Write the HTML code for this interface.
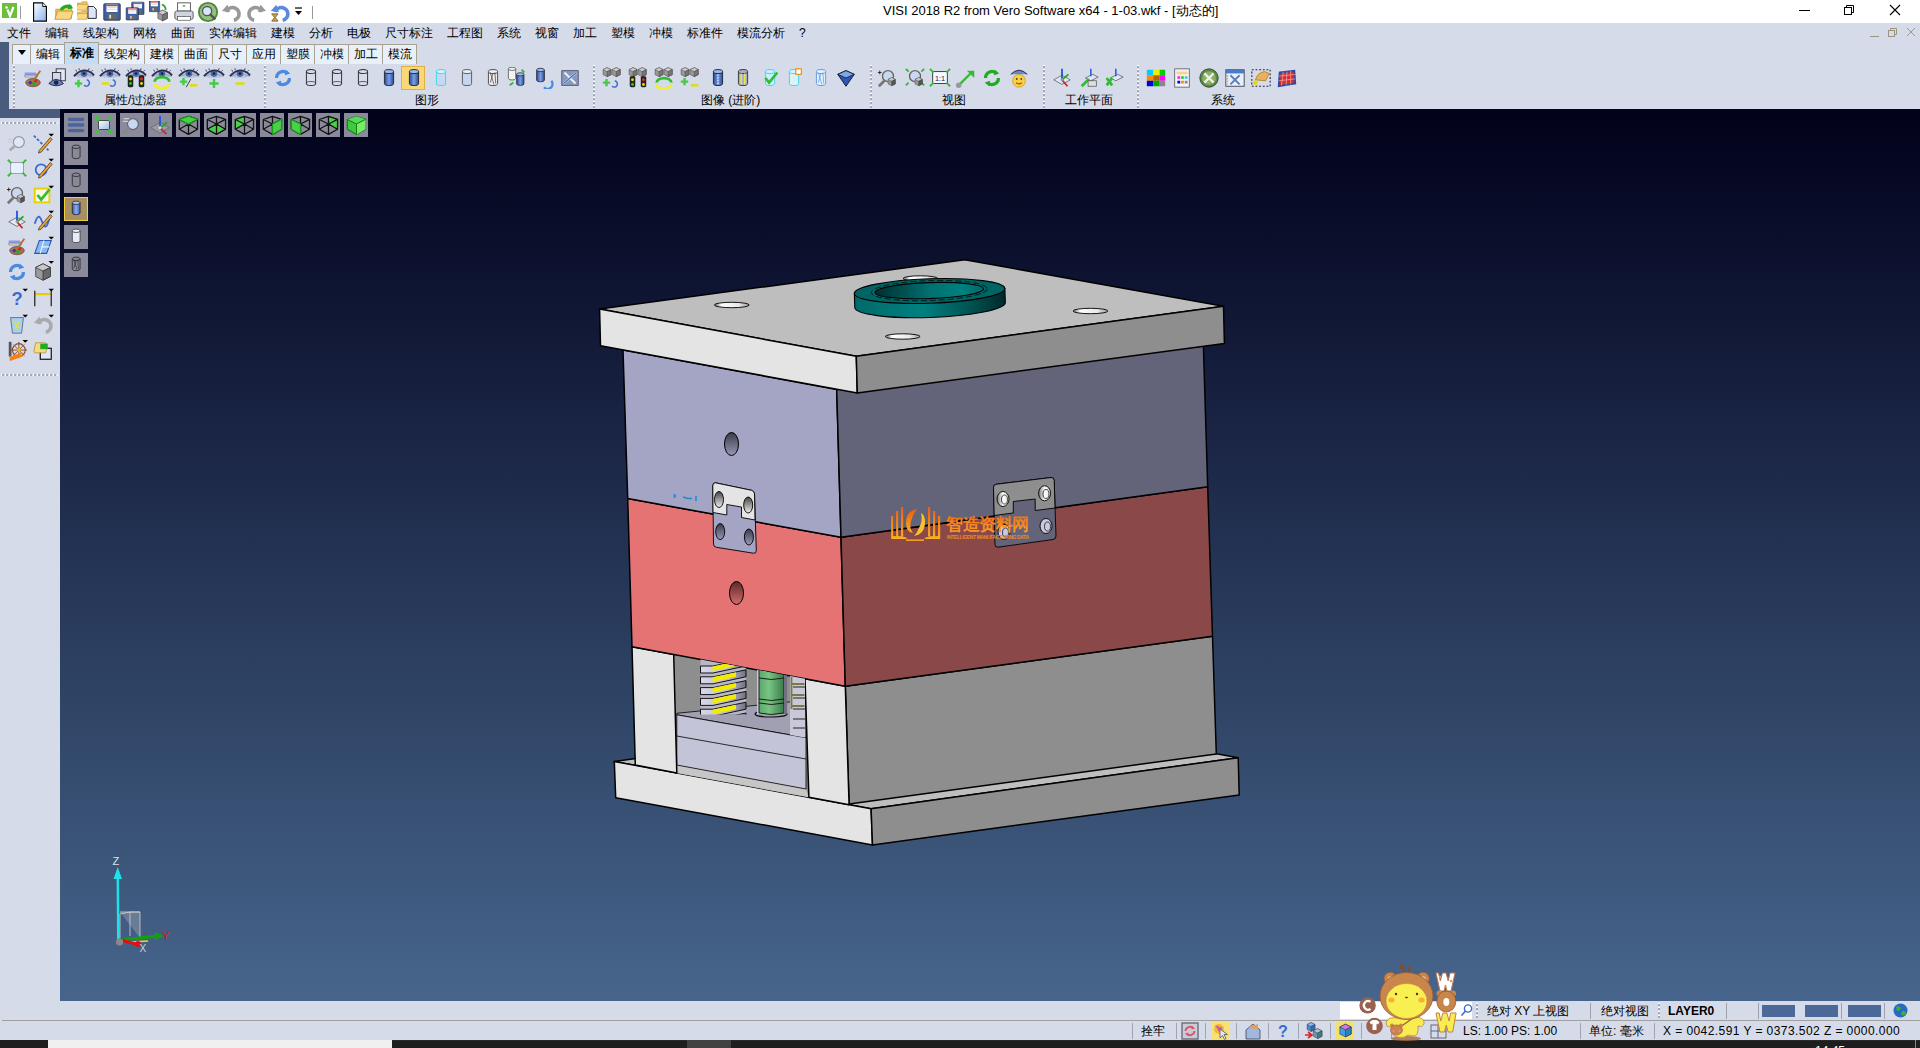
<!DOCTYPE html>
<html><head><meta charset="utf-8"><style>
*{margin:0;padding:0;box-sizing:border-box}
html,body{width:1920px;height:1048px;overflow:hidden;background:#d6dbe9;font-family:"Liberation Sans",sans-serif;position:relative}
.a{position:absolute}
.t{white-space:nowrap;line-height:1}
</style></head><body>
<div class="a" style="left:0;top:0;width:1920px;height:23px;background:#fff"></div>
<svg class="a" style="left:2px;top:3px" width="15" height="15" viewBox="0 0 15 15" ><rect x="0" y="0" width="15" height="15" fill="#6cbf3a"/><path d="M5.5,6.5 l2.5,6.5 l3.5,-9" stroke="#fff" stroke-width="2.2" fill="none"/><circle cx="4.5" cy="4.5" r="1.3" fill="#fff"/></svg>
<div class="a" style="left:20px;top:6px;width:1px;height:13px;background:#999"></div>
<svg class="a" style="left:29px;top:1px" width="22" height="22" viewBox="0 0 24 24" ><path d="M5,2 h10 l4,4 v16 h-14z" fill="url(#gdoc)" stroke="#000" stroke-width="1.2"/><path d="M15,2 v4 h4" fill="#fff" stroke="#000" stroke-width="1"/><defs><linearGradient id="gdoc" x1="0" y1="0" x2="1" y2="1"><stop offset="0" stop-color="#fff"/><stop offset="1" stop-color="#8ab0f0"/></linearGradient></defs></svg>
<svg class="a" style="left:53px;top:1px" width="22" height="22" viewBox="0 0 24 24" ><path d="M3,9 h7 l2,-2 h8 v12 h-17z" fill="#f4c85a" stroke="#b08a30" stroke-width=".8"/><path d="M2,20 l3,-9 h17 l-3,9z" fill="#fbd880" stroke="#b08a30" stroke-width=".8"/><path d="M9,10 a7,6 0 0 1 11,-3" stroke="#2a2" stroke-width="3.5" fill="none"/><path d="M18,3 l4,5 l-6,1z" fill="#2a2"/></svg>
<svg class="a" style="left:77px;top:1px" width="22" height="22" viewBox="0 0 24 24" ><g transform="translate(-3,-4) scale(.7)"><path d="M3,9 h7 l2,-2 h8 v12 h-17z" fill="#f4c85a" stroke="#b08a30" stroke-width=".8"/><path d="M2,20 l3,-9 h17 l-3,9z" fill="#fbd880" stroke="#b08a30" stroke-width=".8"/></g><g transform="translate(-3,6) scale(.7)"><path d="M3,9 h7 l2,-2 h8 v12 h-17z" fill="#f4c85a" stroke="#b08a30" stroke-width=".8"/><path d="M2,20 l3,-9 h17 l-3,9z" fill="#fbd880" stroke="#b08a30" stroke-width=".8"/></g><path d="M12,6 h6 l3,3 v10 h-9z" fill="#dde6f8" stroke="#222" stroke-width="1"/></svg>
<svg class="a" style="left:101px;top:1px" width="22" height="22" viewBox="0 0 24 24" ><rect x="3" y="3" width="18" height="18" rx="1" fill="#3e62a8" stroke="#223" stroke-width=".8"/><rect x="6" y="4" width="12" height="8" fill="#fff"/><path d="M6,5 h12" stroke="#e33" stroke-width="1.4"/><path d="M7,7 h10 M7,9 h10" stroke="#bbb" stroke-width=".6"/><rect x="7" y="14" width="10" height="6" fill="#666"/><rect x="9" y="15" width="2" height="4" fill="#ddd"/></svg>
<svg class="a" style="left:125px;top:1px" width="22" height="22" viewBox="0 0 24 24" ><g transform="translate(5,-1) scale(.75)"><rect x="3" y="3" width="18" height="18" rx="1" fill="#3e62a8" stroke="#223" stroke-width=".8"/><rect x="6" y="4" width="12" height="8" fill="#fff"/><path d="M6,5 h12" stroke="#e33" stroke-width="1.4"/><path d="M7,7 h10 M7,9 h10" stroke="#bbb" stroke-width=".6"/><rect x="7" y="14" width="10" height="6" fill="#666"/><rect x="9" y="15" width="2" height="4" fill="#ddd"/></g><g transform="translate(-1,5) scale(.75)"><rect x="3" y="3" width="18" height="18" rx="1" fill="#3e62a8" stroke="#223" stroke-width=".8"/><rect x="6" y="4" width="12" height="8" fill="#fff"/><path d="M6,5 h12" stroke="#e33" stroke-width="1.4"/><path d="M7,7 h10 M7,9 h10" stroke="#bbb" stroke-width=".6"/><rect x="7" y="14" width="10" height="6" fill="#666"/><rect x="9" y="15" width="2" height="4" fill="#ddd"/></g></svg>
<svg class="a" style="left:149px;top:1px" width="22" height="22" viewBox="0 0 24 24" ><g transform="translate(-2,-2) scale(.65)"><rect x="3" y="3" width="18" height="18" rx="1" fill="#3e62a8" stroke="#223" stroke-width=".8"/><rect x="6" y="4" width="12" height="8" fill="#fff"/><path d="M6,5 h12" stroke="#e33" stroke-width="1.4"/><path d="M7,7 h10 M7,9 h10" stroke="#bbb" stroke-width=".6"/><rect x="7" y="14" width="10" height="6" fill="#666"/><rect x="9" y="15" width="2" height="4" fill="#ddd"/></g><g transform="translate(7,8) scale(.65)"><path d="M12,3 l8,4 v10 l-8,4 l-8,-4 v-10z" fill="#999" stroke="#333" stroke-width=".8"/><path d="M12,3 l8,4 l-8,4 l-8,-4z" fill="#ccc" stroke="#333" stroke-width=".8"/><path d="M12,11 v10 l8,-4 v-10z" fill="#777" stroke="#333" stroke-width=".8"/></g><path d="M14,4 a5,5 0 0 1 4,6" stroke="#2a2" stroke-width="2" fill="none"/></svg>
<svg class="a" style="left:173px;top:1px" width="22" height="22" viewBox="0 0 24 24" ><rect x="5" y="2" width="14" height="9" fill="#fff" stroke="#555" stroke-width="1"/><path d="M10,6 l2,-2 l2,2z" fill="#2a2"/><rect x="2" y="11" width="20" height="9" rx="2" fill="#d0d4dc" stroke="#555" stroke-width="1"/><rect x="5" y="17" width="14" height="4" fill="#fff" stroke="#555" stroke-width=".8"/></svg>
<svg class="a" style="left:197px;top:1px" width="22" height="22" viewBox="0 0 24 24" ><circle cx="12" cy="12" r="11" fill="#4a8a3a"/><circle cx="12" cy="12" r="9" fill="#9ac080"/><circle cx="11" cy="11" r="5" fill="#d8e8f8" stroke="#556" stroke-width="1.5"/><path d="M14,14 l6,6" stroke="#555" stroke-width="2.5"/></svg>
<svg class="a" style="left:221px;top:1px" width="22" height="22" viewBox="0 0 24 24" ><path d="M6,12 a7,7 0 1 1 8,9" stroke="#999" stroke-width="4" fill="none"/><path d="M1,11 l6,-7 l3,8z" fill="#999"/></svg>
<svg class="a" style="left:245px;top:1px" width="22" height="22" viewBox="0 0 24 24" ><path d="M18,12 a7,7 0 1 0 -8,9" stroke="#999" stroke-width="4" fill="none"/><path d="M23,11 l-6,-7 l-3,8z" fill="#999"/></svg>
<svg class="a" style="left:268px;top:1px" width="22" height="22" viewBox="0 0 24 24" ><path d="M8,12 a7,7 0 1 1 8,9" stroke="#5a8ae0" stroke-width="4" fill="none"/><path d="M3,11 l6,-7 l3,8z" fill="#5a8ae0"/><path d="M4,14 h7 l-3,4 l3,4 h-7 l3,-4z" fill="#c8a040" stroke="#653" stroke-width=".8"/></svg>
<svg class="a" style="left:294px;top:7px" width="9" height="9" viewBox="0 0 9 9"><path d="M1,1 h7" stroke="#000" stroke-width="1.2"/><path d="M1,4 h7 l-3.5,4z" fill="#000"/></svg>
<div class="a" style="left:312px;top:6px;width:1px;height:13px;background:#999"></div>
<div class="a t" style="left:883px;top:4px;font-size:13px;color:#000;font-weight:normal;">VISI 2018 R2 from Vero Software x64 - 1-03.wkf - [动态的]</div>
<div class="a" style="left:1799px;top:10px;width:11px;height:1px;background:#000"></div>
<svg class="a" style="left:1843px;top:4px" width="12" height="12" viewBox="0 0 12 12" ><rect x="1.5" y="3.5" width="7" height="7" fill="none" stroke="#000" stroke-width="1"/><path d="M3.5,3.5 v-2 h7 v7 h-2" fill="none" stroke="#000" stroke-width="1"/></svg>
<svg class="a" style="left:1889px;top:4px" width="12" height="12" viewBox="0 0 12 12" ><path d="M1,1 L11,11 M11,1 L1,11" stroke="#000" stroke-width="1.1"/></svg>
<div class="a t" style="left:7px;top:27px;font-size:12px;color:#000;font-weight:normal;">文件</div>
<div class="a t" style="left:45px;top:27px;font-size:12px;color:#000;font-weight:normal;">编辑</div>
<div class="a t" style="left:83px;top:27px;font-size:12px;color:#000;font-weight:normal;">线架构</div>
<div class="a t" style="left:133px;top:27px;font-size:12px;color:#000;font-weight:normal;">网格</div>
<div class="a t" style="left:171px;top:27px;font-size:12px;color:#000;font-weight:normal;">曲面</div>
<div class="a t" style="left:209px;top:27px;font-size:12px;color:#000;font-weight:normal;">实体编辑</div>
<div class="a t" style="left:271px;top:27px;font-size:12px;color:#000;font-weight:normal;">建模</div>
<div class="a t" style="left:309px;top:27px;font-size:12px;color:#000;font-weight:normal;">分析</div>
<div class="a t" style="left:347px;top:27px;font-size:12px;color:#000;font-weight:normal;">电极</div>
<div class="a t" style="left:385px;top:27px;font-size:12px;color:#000;font-weight:normal;">尺寸标注</div>
<div class="a t" style="left:447px;top:27px;font-size:12px;color:#000;font-weight:normal;">工程图</div>
<div class="a t" style="left:497px;top:27px;font-size:12px;color:#000;font-weight:normal;">系统</div>
<div class="a t" style="left:535px;top:27px;font-size:12px;color:#000;font-weight:normal;">视窗</div>
<div class="a t" style="left:573px;top:27px;font-size:12px;color:#000;font-weight:normal;">加工</div>
<div class="a t" style="left:611px;top:27px;font-size:12px;color:#000;font-weight:normal;">塑模</div>
<div class="a t" style="left:649px;top:27px;font-size:12px;color:#000;font-weight:normal;">冲模</div>
<div class="a t" style="left:687px;top:27px;font-size:12px;color:#000;font-weight:normal;">标准件</div>
<div class="a t" style="left:737px;top:27px;font-size:12px;color:#000;font-weight:normal;">模流分析</div>
<div class="a t" style="left:799px;top:27px;font-size:12px;color:#000;font-weight:normal;">?</div>
<svg class="a" style="left:1868px;top:26px" width="50" height="14" viewBox="0 0 50 14" ><path d="M2,10.5 h9" stroke="#9a9480" stroke-width="1"/><rect x="20.5" y="4.5" width="6" height="6" fill="none" stroke="#9a9480"/><path d="M22.5,4.5 v-2 h6 v6 h-2" fill="none" stroke="#9a9480"/><path d="M39,2 l8,8 M47,2 l-8,8" stroke="#9a9480" stroke-width=".9"/></svg>
<div class="a" style="left:0;top:42px;width:9px;height:67px;background:#4a5c7e"></div>
<div class="a" style="left:0;top:109px;width:60px;height:9px;background:#4a5c7e"></div>
<div class="a" style="left:12px;top:44px;width:19px;height:20px;background:#e8f0fb;border:1px solid #a8a290;border-bottom:none"></div>
<svg class="a" style="left:18px;top:50px" width="8" height="6" viewBox="0 0 8 6" ><path d="M0,0 h8 l-4,5z" fill="#000"/></svg>
<div class="a" style="left:30px;top:44px;width:35px;height:20px;background:#e8f0fb;border:1px solid #a8a290;border-bottom:none"></div>
<div class="a t" style="left:36px;top:48px;font-size:12px;color:#000;font-weight:normal;">编辑</div>
<div class="a" style="left:64px;top:42px;width:35px;height:22px;background:#c4dcf4;border:1px solid #a8a290;border-bottom:none"></div>
<div class="a t" style="left:70px;top:47px;font-size:12px;color:#000;font-weight:bold;">标准</div>
<div class="a" style="left:98px;top:44px;width:47px;height:20px;background:#e8f0fb;border:1px solid #a8a290;border-bottom:none"></div>
<div class="a t" style="left:104px;top:48px;font-size:12px;color:#000;font-weight:normal;">线架构</div>
<div class="a" style="left:144px;top:44px;width:35px;height:20px;background:#e8f0fb;border:1px solid #a8a290;border-bottom:none"></div>
<div class="a t" style="left:150px;top:48px;font-size:12px;color:#000;font-weight:normal;">建模</div>
<div class="a" style="left:178px;top:44px;width:35px;height:20px;background:#e8f0fb;border:1px solid #a8a290;border-bottom:none"></div>
<div class="a t" style="left:184px;top:48px;font-size:12px;color:#000;font-weight:normal;">曲面</div>
<div class="a" style="left:212px;top:44px;width:35px;height:20px;background:#e8f0fb;border:1px solid #a8a290;border-bottom:none"></div>
<div class="a t" style="left:218px;top:48px;font-size:12px;color:#000;font-weight:normal;">尺寸</div>
<div class="a" style="left:246px;top:44px;width:35px;height:20px;background:#e8f0fb;border:1px solid #a8a290;border-bottom:none"></div>
<div class="a t" style="left:252px;top:48px;font-size:12px;color:#000;font-weight:normal;">应用</div>
<div class="a" style="left:280px;top:44px;width:35px;height:20px;background:#e8f0fb;border:1px solid #a8a290;border-bottom:none"></div>
<div class="a t" style="left:286px;top:48px;font-size:12px;color:#000;font-weight:normal;">塑膜</div>
<div class="a" style="left:314px;top:44px;width:35px;height:20px;background:#e8f0fb;border:1px solid #a8a290;border-bottom:none"></div>
<div class="a t" style="left:320px;top:48px;font-size:12px;color:#000;font-weight:normal;">冲模</div>
<div class="a" style="left:348px;top:44px;width:35px;height:20px;background:#e8f0fb;border:1px solid #a8a290;border-bottom:none"></div>
<div class="a t" style="left:354px;top:48px;font-size:12px;color:#000;font-weight:normal;">加工</div>
<div class="a" style="left:382px;top:44px;width:35px;height:20px;background:#e8f0fb;border:1px solid #a8a290;border-bottom:none"></div>
<div class="a t" style="left:388px;top:48px;font-size:12px;color:#000;font-weight:normal;">模流</div>
<div class="a" style="left:13px;top:65px;width:2px;height:43px;background:repeating-linear-gradient(#fff 0 1px,#a4a8b4 1px 3px,transparent 3px 4px)"></div>
<div class="a" style="left:264px;top:65px;width:2px;height:43px;background:repeating-linear-gradient(#fff 0 1px,#a4a8b4 1px 3px,transparent 3px 4px)"></div>
<div class="a" style="left:593px;top:65px;width:2px;height:43px;background:repeating-linear-gradient(#fff 0 1px,#a4a8b4 1px 3px,transparent 3px 4px)"></div>
<div class="a" style="left:870px;top:65px;width:2px;height:43px;background:repeating-linear-gradient(#fff 0 1px,#a4a8b4 1px 3px,transparent 3px 4px)"></div>
<div class="a" style="left:1043px;top:65px;width:2px;height:43px;background:repeating-linear-gradient(#fff 0 1px,#a4a8b4 1px 3px,transparent 3px 4px)"></div>
<div class="a" style="left:1137px;top:65px;width:2px;height:43px;background:repeating-linear-gradient(#fff 0 1px,#a4a8b4 1px 3px,transparent 3px 4px)"></div>
<div class="a t" style="left:104px;top:94px;font-size:12px;color:#000;font-weight:normal;">属性/过滤器</div>
<div class="a t" style="left:415px;top:94px;font-size:12px;color:#000;font-weight:normal;">图形</div>
<div class="a t" style="left:701px;top:94px;font-size:12px;color:#000;font-weight:normal;">图像 (进阶)</div>
<div class="a t" style="left:942px;top:94px;font-size:12px;color:#000;font-weight:normal;">视图</div>
<div class="a t" style="left:1065px;top:94px;font-size:12px;color:#000;font-weight:normal;">工作平面</div>
<div class="a t" style="left:1211px;top:94px;font-size:12px;color:#000;font-weight:normal;">系统</div>
<svg class="a" style="left:22px;top:67px" width="22" height="22" viewBox="0 0 24 24" ><path d="M3,6 h12 l2,3 h-14z" fill="#8a9ae8"/><path d="M3,9 h14 v2 h-14z" fill="#ddd" stroke="#666" stroke-width=".5"/><ellipse cx="12" cy="17" rx="8" ry="4.5" fill="#a07050" stroke="#543" stroke-width=".7"/><circle cx="9" cy="17" r="1.8" fill="#23d"/><circle cx="13" cy="18" r="1.8" fill="#2a2"/><circle cx="15" cy="15" r="1.8" fill="#d22"/><path d="M13,14 l7,-10" stroke="#b07030" stroke-width="2"/></svg>
<svg class="a" style="left:47px;top:67px" width="22" height="22" viewBox="0 0 24 24" ><rect x="10" y="2" width="10" height="13" fill="#dfe8f8" stroke="#333" stroke-width="1"/><rect x="6" y="6" width="9" height="10" fill="#cfd8f0" stroke="#333" stroke-width="1"/><path d="M2,18 q8,-9 16,0 q-8,5 -16,0z" fill="#6a88c8" stroke="#224" stroke-width="1"/><circle cx="10" cy="17" r="2.5" fill="#224"/></svg>
<svg class="a" style="left:73px;top:67px" width="22" height="22" viewBox="0 0 24 24" ><path d="M1,10 q11,-11 22,0 q-11,4 -22,0z" fill="#b8c4e0"/><path d="M1,10 q11,-4 22,0" fill="none" stroke="#8a90b0" stroke-width=".8"/><circle cx="12" cy="7.2" r="3.6" fill="#4a6aa8"/><circle cx="12" cy="7.2" r="1.5" fill="#1a2240"/><path d="M1,10 q11,-12 22,-1" stroke="#2a3050" stroke-width="2" fill="none"/><path d="M4,5 l-1,-2 M7,3.5 l-.5,-2 M17,3.5 l.5,-2 M20,5 l1.5,-1.5" stroke="#2a3050" stroke-width="1"/><path d="M2,18 h8 M6,14 v8" stroke="#4c4" stroke-width="2.6"/><path d="M12,20 a3.5,3.5 0 1 0 3,-6" stroke="#3a6ad0" stroke-width="1.6" fill="none"/></svg>
<svg class="a" style="left:99px;top:67px" width="22" height="22" viewBox="0 0 24 24" ><path d="M1,10 q11,-11 22,0 q-11,4 -22,0z" fill="#b8c4e0"/><path d="M1,10 q11,-4 22,0" fill="none" stroke="#8a90b0" stroke-width=".8"/><circle cx="12" cy="7.2" r="3.6" fill="#4a6aa8"/><circle cx="12" cy="7.2" r="1.5" fill="#1a2240"/><path d="M1,10 q11,-12 22,-1" stroke="#2a3050" stroke-width="2" fill="none"/><path d="M4,5 l-1,-2 M7,3.5 l-.5,-2 M17,3.5 l.5,-2 M20,5 l1.5,-1.5" stroke="#2a3050" stroke-width="1"/><path d="M3,18 h8" stroke="#dd0" stroke-width="2.6"/><path d="M12,20 a3.5,3.5 0 1 0 3,-6" stroke="#3a6ad0" stroke-width="1.6" fill="none"/></svg>
<svg class="a" style="left:125px;top:67px" width="22" height="22" viewBox="0 0 24 24" ><path d="M1,10 q11,-11 22,0 q-11,4 -22,0z" fill="#b8c4e0"/><path d="M1,10 q11,-4 22,0" fill="none" stroke="#8a90b0" stroke-width=".8"/><circle cx="12" cy="7.2" r="3.6" fill="#4a6aa8"/><circle cx="12" cy="7.2" r="1.5" fill="#1a2240"/><path d="M1,10 q11,-12 22,-1" stroke="#2a3050" stroke-width="2" fill="none"/><path d="M4,5 l-1,-2 M7,3.5 l-.5,-2 M17,3.5 l.5,-2 M20,5 l1.5,-1.5" stroke="#2a3050" stroke-width="1"/><rect x="3" y="9" width="6" height="13" rx="1.5" fill="#222"/><rect x="15" y="9" width="6" height="13" rx="1.5" fill="#222"/><circle cx="6" cy="13" r="1.6" fill="#dd0"/><circle cx="6" cy="18" r="1.6" fill="#2c2"/><circle cx="18" cy="13" r="1.6" fill="#e22"/><circle cx="18" cy="18" r="1.6" fill="#dd0"/></svg>
<svg class="a" style="left:151px;top:67px" width="22" height="22" viewBox="0 0 24 24" ><path d="M1,10 q11,-11 22,0 q-11,4 -22,0z" fill="#b8c4e0"/><path d="M1,10 q11,-4 22,0" fill="none" stroke="#8a90b0" stroke-width=".8"/><circle cx="12" cy="7.2" r="3.6" fill="#4a6aa8"/><circle cx="12" cy="7.2" r="1.5" fill="#1a2240"/><path d="M1,10 q11,-12 22,-1" stroke="#2a3050" stroke-width="2" fill="none"/><path d="M4,5 l-1,-2 M7,3.5 l-.5,-2 M17,3.5 l.5,-2 M20,5 l1.5,-1.5" stroke="#2a3050" stroke-width="1"/><path d="M4,16 a8,5 0 0 1 16,0" stroke="#3b3" stroke-width="3" fill="none"/><path d="M20,18 a8,5 0 0 1 -16,0" stroke="#ee3" stroke-width="3" fill="none"/></svg>
<svg class="a" style="left:178px;top:67px" width="22" height="22" viewBox="0 0 24 24" ><path d="M1,10 q11,-11 22,0 q-11,4 -22,0z" fill="#b8c4e0"/><path d="M1,10 q11,-4 22,0" fill="none" stroke="#8a90b0" stroke-width=".8"/><circle cx="12" cy="7.2" r="3.6" fill="#4a6aa8"/><circle cx="12" cy="7.2" r="1.5" fill="#1a2240"/><path d="M1,10 q11,-12 22,-1" stroke="#2a3050" stroke-width="2" fill="none"/><path d="M4,5 l-1,-2 M7,3.5 l-.5,-2 M17,3.5 l.5,-2 M20,5 l1.5,-1.5" stroke="#2a3050" stroke-width="1"/><path d="M2,16 h8 M6,12 v8" stroke="#4c4" stroke-width="2.6"/><path d="M13,20 h8" stroke="#dd0" stroke-width="2.6"/><path d="M9,22 l5,-9" stroke="#333" stroke-width="1"/></svg>
<svg class="a" style="left:203px;top:67px" width="22" height="22" viewBox="0 0 24 24" ><path d="M1,10 q11,-11 22,0 q-11,4 -22,0z" fill="#b8c4e0"/><path d="M1,10 q11,-4 22,0" fill="none" stroke="#8a90b0" stroke-width=".8"/><circle cx="12" cy="7.2" r="3.6" fill="#4a6aa8"/><circle cx="12" cy="7.2" r="1.5" fill="#1a2240"/><path d="M1,10 q11,-12 22,-1" stroke="#2a3050" stroke-width="2" fill="none"/><path d="M4,5 l-1,-2 M7,3.5 l-.5,-2 M17,3.5 l.5,-2 M20,5 l1.5,-1.5" stroke="#2a3050" stroke-width="1"/><path d="M7,18 h10 M12,13 v10" stroke="#4c4" stroke-width="2.6"/></svg>
<svg class="a" style="left:229px;top:67px" width="22" height="22" viewBox="0 0 24 24" ><path d="M1,10 q11,-11 22,0 q-11,4 -22,0z" fill="#b8c4e0"/><path d="M1,10 q11,-4 22,0" fill="none" stroke="#8a90b0" stroke-width=".8"/><circle cx="12" cy="7.2" r="3.6" fill="#4a6aa8"/><circle cx="12" cy="7.2" r="1.5" fill="#1a2240"/><path d="M1,10 q11,-12 22,-1" stroke="#2a3050" stroke-width="2" fill="none"/><path d="M4,5 l-1,-2 M7,3.5 l-.5,-2 M17,3.5 l.5,-2 M20,5 l1.5,-1.5" stroke="#2a3050" stroke-width="1"/><path d="M7,18 h10" stroke="#dd0" stroke-width="2.6"/></svg>
<svg class="a" style="left:272px;top:67px" width="22" height="22" viewBox="0 0 24 24" ><path d="M5,12 a7,7 0 0 1 12,-5" stroke="#4a8ae0" stroke-width="3.5" fill="none"/><path d="M15,3 l5,4 l-6,2z" fill="#4a8ae0"/><path d="M19,12 a7,7 0 0 1 -12,5" stroke="#4a8ae0" stroke-width="3.5" fill="none"/><path d="M9,21 l-5,-4 l6,-2z" fill="#4a8ae0"/></svg>
<svg class="a" style="left:300px;top:67px" width="22" height="22" viewBox="0 0 24 24" ><path d="M7,5 v13 a5,2.2 0 0 0 10,0 v-13" fill="none" stroke="#333" stroke-width="1.1"/><path d="M7,18 a5,2.2 0 0 1 10,0" fill="none" stroke="#333" stroke-width="0.77"/><ellipse cx="12" cy="5" rx="5" ry="2.2" fill="none" stroke="#333" stroke-width="1.1"/></svg>
<svg class="a" style="left:326px;top:67px" width="22" height="22" viewBox="0 0 24 24" ><path d="M7,5 v13 a5,2.2 0 0 0 10,0 v-13" fill="none" stroke="#333" stroke-width="1.1"/><path d="M7,18 a5,2.2 0 0 1 10,0" fill="none" stroke="#333" stroke-width="0.77"/><ellipse cx="12" cy="5" rx="5" ry="2.2" fill="none" stroke="#333" stroke-width="1.1"/></svg>
<svg class="a" style="left:352px;top:67px" width="22" height="22" viewBox="0 0 24 24" ><path d="M7,5 v13 a5,2.2 0 0 0 10,0 v-13" fill="none" stroke="#333" stroke-width="1.1"/><path d="M7,18 a5,2.2 0 0 1 10,0" fill="none" stroke="#333" stroke-width="0.77"/><ellipse cx="12" cy="5" rx="5" ry="2.2" fill="none" stroke="#333" stroke-width="1.1"/></svg>
<svg class="a" style="left:378px;top:67px" width="22" height="22" viewBox="0 0 24 24" ><defs><linearGradient id="cb" x1="0" x2="1"><stop offset="0" stop-color="#2a4a9a"/><stop offset=".5" stop-color="#7aa0e0"/><stop offset="1" stop-color="#2a4a9a"/></linearGradient></defs><path d="M7,5 v13 a5,2.2 0 0 0 10,0 v-13" fill="url(#cb)" stroke="#223" stroke-width="1"/><ellipse cx="12" cy="5" rx="5" ry="2.2" fill="#9ab8f0" stroke="#223" stroke-width="1"/></svg>
<div class="a" style="left:401px;top:66px;width:24px;height:24px;background:#f8d878;border:1px solid #e0b040"></div>
<svg class="a" style="left:403px;top:67px" width="22" height="22" viewBox="0 0 24 24" ><defs><linearGradient id="cb" x1="0" x2="1"><stop offset="0" stop-color="#2a4a9a"/><stop offset=".5" stop-color="#7aa0e0"/><stop offset="1" stop-color="#2a4a9a"/></linearGradient></defs><path d="M7,5 v13 a5,2.2 0 0 0 10,0 v-13" fill="url(#cb)" stroke="#223" stroke-width="1"/><ellipse cx="12" cy="5" rx="5" ry="2.2" fill="#9ab8f0" stroke="#223" stroke-width="1"/></svg>
<svg class="a" style="left:430px;top:67px" width="22" height="22" viewBox="0 0 24 24" ><path d="M7,5 v13 a5,2.2 0 0 0 10,0 v-13" fill="#c8d8f0" stroke="#40d8f0" stroke-width="1.1"/><ellipse cx="12" cy="5" rx="5" ry="2.2" fill="#e0f0fa" stroke="#40d8f0" stroke-width="1.1"/></svg>
<svg class="a" style="left:456px;top:67px" width="22" height="22" viewBox="0 0 24 24" ><path d="M7,5 v13 a5,2.2 0 0 0 10,0 v-13" fill="#c8d4f0" stroke="#555" stroke-width="1"/><ellipse cx="12" cy="5" rx="5" ry="2.2" fill="#e8eef8" stroke="#555" stroke-width="1"/></svg>
<svg class="a" style="left:482px;top:67px" width="22" height="22" viewBox="0 0 24 24" ><path d="M7,5 v13 a5,2.2 0 0 0 10,0 v-13" fill="#eee" stroke="#444" stroke-width="1"/><ellipse cx="12" cy="5" rx="5" ry="2.2" fill="#eee" stroke="#444" stroke-width="1"/><path d="M9,6 l4,13 M12,7 l-3,10 M14,6 l1,12" stroke="#444" stroke-width=".8"/></svg>
<svg class="a" style="left:506px;top:67px" width="22" height="22" viewBox="0 0 24 24" ><g transform="translate(-3,-2) scale(.8)"><path d="M7,5 v13 a5,2.2 0 0 0 10,0 v-13" fill="#f4f4f4" stroke="#444" stroke-width="1"/><ellipse cx="12" cy="5" rx="5" ry="2.2" fill="#f4f4f4" stroke="#444" stroke-width="1"/></g><g transform="translate(6,4) scale(.8)"><defs><linearGradient id="cb" x1="0" x2="1"><stop offset="0" stop-color="#2a4a9a"/><stop offset=".5" stop-color="#7aa0e0"/><stop offset="1" stop-color="#2a4a9a"/></linearGradient></defs><path d="M7,5 v13 a5,2.2 0 0 0 10,0 v-13" fill="url(#cb)" stroke="#223" stroke-width="1"/><ellipse cx="12" cy="5" rx="5" ry="2.2" fill="#9ab8f0" stroke="#223" stroke-width="1"/></g><path d="M4,20 l4,-3 M17,3 l3,3" stroke="#3b3" stroke-width="2"/></svg>
<svg class="a" style="left:533px;top:67px" width="22" height="22" viewBox="0 0 24 24" ><g transform="translate(-2,-1) scale(.85)"><defs><linearGradient id="cb" x1="0" x2="1"><stop offset="0" stop-color="#2a4a9a"/><stop offset=".5" stop-color="#7aa0e0"/><stop offset="1" stop-color="#2a4a9a"/></linearGradient></defs><path d="M7,5 v13 a5,2.2 0 0 0 10,0 v-13" fill="url(#cb)" stroke="#223" stroke-width="1"/><ellipse cx="12" cy="5" rx="5" ry="2.2" fill="#9ab8f0" stroke="#223" stroke-width="1"/></g><path d="M12,22 a5,5 0 0 0 8,-7" stroke="#4a8ae0" stroke-width="2.5" fill="none"/></svg>
<svg class="a" style="left:559px;top:67px" width="22" height="22" viewBox="0 0 24 24" ><rect x="3" y="4" width="18" height="16" fill="#8898b8" stroke="#445" stroke-width=".8"/><path d="M5,18 l14,-12 M6,6 l12,12" stroke="#eee" stroke-width="2.2"/><path d="M5,18 l14,-12" stroke="#3a6ad0" stroke-width="1.2"/></svg>
<svg class="a" style="left:601px;top:67px" width="22" height="22" viewBox="0 0 24 24" ><g transform="translate(0,-1) scale(.55)"><path d="M12,3 l8,4 v10 l-8,4 l-8,-4 v-10z" fill="#999" stroke="#333" stroke-width=".8"/><path d="M12,3 l8,4 l-8,4 l-8,-4z" fill="#ccc" stroke="#333" stroke-width=".8"/><path d="M12,11 v10 l8,-4 v-10z" fill="#777" stroke="#333" stroke-width=".8"/></g><g transform="translate(10,-1) scale(.55)"><path d="M12,3 l8,4 v10 l-8,4 l-8,-4 v-10z" fill="#999" stroke="#333" stroke-width=".8"/><path d="M12,3 l8,4 l-8,4 l-8,-4z" fill="#ccc" stroke="#333" stroke-width=".8"/><path d="M12,11 v10 l8,-4 v-10z" fill="#777" stroke="#333" stroke-width=".8"/></g><path d="M2,17 h8 M6,13 v8" stroke="#4c4" stroke-width="2.6"/><path d="M12,21 a3.5,3.5 0 1 0 3,-6" stroke="#3a6ad0" stroke-width="1.6" fill="none"/></svg>
<svg class="a" style="left:627px;top:67px" width="22" height="22" viewBox="0 0 24 24" ><g transform="translate(0,-1) scale(.55)"><path d="M12,3 l8,4 v10 l-8,4 l-8,-4 v-10z" fill="#999" stroke="#333" stroke-width=".8"/><path d="M12,3 l8,4 l-8,4 l-8,-4z" fill="#ccc" stroke="#333" stroke-width=".8"/><path d="M12,11 v10 l8,-4 v-10z" fill="#777" stroke="#333" stroke-width=".8"/></g><g transform="translate(10,-1) scale(.55)"><path d="M12,3 l8,4 v10 l-8,4 l-8,-4 v-10z" fill="#999" stroke="#333" stroke-width=".8"/><path d="M12,3 l8,4 l-8,4 l-8,-4z" fill="#ccc" stroke="#333" stroke-width=".8"/><path d="M12,11 v10 l8,-4 v-10z" fill="#777" stroke="#333" stroke-width=".8"/></g><rect x="3" y="10" width="6" height="12" rx="1.5" fill="#222"/><rect x="15" y="10" width="6" height="12" rx="1.5" fill="#222"/><circle cx="6" cy="14" r="1.6" fill="#dd0"/><circle cx="6" cy="19" r="1.6" fill="#2c2"/><circle cx="18" cy="14" r="1.6" fill="#e22"/><circle cx="18" cy="19" r="1.6" fill="#dd0"/></svg>
<svg class="a" style="left:653px;top:67px" width="22" height="22" viewBox="0 0 24 24" ><g transform="translate(0,-1) scale(.55)"><path d="M12,3 l8,4 v10 l-8,4 l-8,-4 v-10z" fill="#999" stroke="#333" stroke-width=".8"/><path d="M12,3 l8,4 l-8,4 l-8,-4z" fill="#ccc" stroke="#333" stroke-width=".8"/><path d="M12,11 v10 l8,-4 v-10z" fill="#777" stroke="#333" stroke-width=".8"/></g><g transform="translate(10,-1) scale(.55)"><path d="M12,3 l8,4 v10 l-8,4 l-8,-4 v-10z" fill="#999" stroke="#333" stroke-width=".8"/><path d="M12,3 l8,4 l-8,4 l-8,-4z" fill="#ccc" stroke="#333" stroke-width=".8"/><path d="M12,11 v10 l8,-4 v-10z" fill="#777" stroke="#333" stroke-width=".8"/></g><path d="M4,17 a8,5 0 0 1 16,0" stroke="#3b3" stroke-width="3" fill="none"/><path d="M20,19 a8,5 0 0 1 -16,0" stroke="#ee3" stroke-width="3" fill="none"/></svg>
<svg class="a" style="left:679px;top:67px" width="22" height="22" viewBox="0 0 24 24" ><g transform="translate(0,-1) scale(.55)"><path d="M12,3 l8,4 v10 l-8,4 l-8,-4 v-10z" fill="#999" stroke="#333" stroke-width=".8"/><path d="M12,3 l8,4 l-8,4 l-8,-4z" fill="#ccc" stroke="#333" stroke-width=".8"/><path d="M12,11 v10 l8,-4 v-10z" fill="#777" stroke="#333" stroke-width=".8"/></g><g transform="translate(10,-1) scale(.55)"><path d="M12,3 l8,4 v10 l-8,4 l-8,-4 v-10z" fill="#999" stroke="#333" stroke-width=".8"/><path d="M12,3 l8,4 l-8,4 l-8,-4z" fill="#ccc" stroke="#333" stroke-width=".8"/><path d="M12,11 v10 l8,-4 v-10z" fill="#777" stroke="#333" stroke-width=".8"/></g><path d="M2,16 h8 M6,12 v8" stroke="#4c4" stroke-width="2.6"/><path d="M13,20 h8" stroke="#dd0" stroke-width="2.6"/></svg>
<svg class="a" style="left:707px;top:67px" width="22" height="22" viewBox="0 0 24 24" ><defs><linearGradient id="cb" x1="0" x2="1"><stop offset="0" stop-color="#2a4a9a"/><stop offset=".5" stop-color="#7aa0e0"/><stop offset="1" stop-color="#2a4a9a"/></linearGradient></defs><path d="M7,5 v13 a5,2.2 0 0 0 10,0 v-13" fill="url(#cb)" stroke="#223" stroke-width="1"/><ellipse cx="12" cy="5" rx="5" ry="2.2" fill="#9ab8f0" stroke="#223" stroke-width="1"/><path d="M12,8 v11" stroke="#fff" stroke-width="1.2" stroke-dasharray="1.5 1.5"/></svg>
<svg class="a" style="left:732px;top:67px" width="22" height="22" viewBox="0 0 24 24" ><path d="M7,5 v13 a5,2.2 0 0 0 10,0 v-13" fill="#aab0c8" stroke="#333" stroke-width="1"/><ellipse cx="12" cy="5" rx="5" ry="2.2" fill="#aab0c8" stroke="#333" stroke-width="1"/><path d="M10,7 v12 M14,7 v12" stroke="#ee3" stroke-width="1.5"/></svg>
<svg class="a" style="left:759px;top:67px" width="22" height="22" viewBox="0 0 24 24" ><path d="M7,5 v13 a5,2.2 0 0 0 10,0 v-13" fill="#c8f0fa" stroke="#40d0f0" stroke-width="1"/><ellipse cx="12" cy="5" rx="5" ry="2.2" fill="#c8f0fa" stroke="#40d0f0" stroke-width="1"/><path d="M7,12 l4,5 l9,-11" stroke="#3b3" stroke-width="3" fill="none"/></svg>
<svg class="a" style="left:783px;top:67px" width="22" height="22" viewBox="0 0 24 24" ><path d="M7,5 v13 a5,2.2 0 0 0 10,0 v-13" fill="#d8f4fa" stroke="#40d0f0" stroke-width="1"/><ellipse cx="12" cy="5" rx="5" ry="2.2" fill="#d8f4fa" stroke="#40d0f0" stroke-width="1"/><rect x="14" y="2" width="6" height="6" fill="#fff" stroke="#e80" stroke-width="1.2"/></svg>
<svg class="a" style="left:810px;top:67px" width="22" height="22" viewBox="0 0 24 24" ><path d="M7,5 v13 a5,2.2 0 0 0 10,0 v-13" fill="#e4f0fc" stroke="#5a9ae0" stroke-width="1"/><ellipse cx="12" cy="5" rx="5" ry="2.2" fill="#e4f0fc" stroke="#5a9ae0" stroke-width="1"/><path d="M9,6 l4,13 M12,7 l-3,10 M14,6 l1,12" stroke="#5a9ae0" stroke-width=".8"/></svg>
<svg class="a" style="left:835px;top:67px" width="22" height="22" viewBox="0 0 24 24" ><path d="M3,8 l9,-4 l9,4 l-9,13z" fill="#2a58b8" stroke="#112" stroke-width="1"/><path d="M3,8 l9,-4 l9,4 l-9,4z" fill="#7aa8e8" stroke="#112" stroke-width=".8"/></svg>
<svg class="a" style="left:877px;top:67px" width="22" height="22" viewBox="0 0 24 24" ><path d="M3,4 v4 M1,6 h4" stroke="#222" stroke-width="1"/><circle cx="12" cy="10" r="6" fill="#c8d8f0" stroke="#666" stroke-width="1.5"/><path d="M8,15 l-6,6" stroke="#777" stroke-width="3"/><g transform="translate(10,10) scale(.5)"><path d="M12,3 l8,4 v10 l-8,4 l-8,-4 v-10z" fill="#999" stroke="#333" stroke-width=".8"/><path d="M12,3 l8,4 l-8,4 l-8,-4z" fill="#ccc" stroke="#333" stroke-width=".8"/><path d="M12,11 v10 l8,-4 v-10z" fill="#555" stroke="#333" stroke-width=".8"/></g></svg>
<svg class="a" style="left:904px;top:67px" width="22" height="22" viewBox="0 0 24 24" ><circle cx="12" cy="10" r="6" fill="#c8d8f0" stroke="#666" stroke-width="1.5"/><path d="M2,2 l3,3 M22,2 l-3,3 M2,20 l3,-3 M22,20 l-3,-3" stroke="#3b3" stroke-width="2"/><g transform="translate(10,10) scale(.5)"><path d="M12,3 l8,4 v10 l-8,4 l-8,-4 v-10z" fill="#999" stroke="#333" stroke-width=".8"/><path d="M12,3 l8,4 l-8,4 l-8,-4z" fill="#ccc" stroke="#333" stroke-width=".8"/><path d="M12,11 v10 l8,-4 v-10z" fill="#555" stroke="#333" stroke-width=".8"/></g></svg>
<svg class="a" style="left:929px;top:67px" width="22" height="22" viewBox="0 0 24 24" ><rect x="4" y="5" width="16" height="13" fill="#f4f8ff" stroke="#333" stroke-width="1"/><text x="12" y="15" font-size="8" text-anchor="middle" fill="#224" font-family="Liberation Sans">1:1</text><path d="M1,2 l4,4 M23,2 l-4,4 M1,21 l4,-4 M23,21 l-4,-4" stroke="#3b3" stroke-width="2"/></svg>
<svg class="a" style="left:955px;top:67px" width="22" height="22" viewBox="0 0 24 24" ><path d="M4,20 l14,-14" stroke="#3b3" stroke-width="2.5"/><path d="M13,4 h8 v8z" fill="#3b3"/><circle cx="4" cy="20" r="3" fill="#999"/></svg>
<svg class="a" style="left:981px;top:67px" width="22" height="22" viewBox="0 0 24 24" ><path d="M5,12 a7,7 0 0 1 12,-5" stroke="#2a2" stroke-width="3.5" fill="none"/><path d="M15,3 l5,4 l-6,2z" fill="#2a2"/><path d="M19,12 a7,7 0 0 1 -12,5" stroke="#2a2" stroke-width="3.5" fill="none"/><path d="M9,21 l-5,-4 l6,-2z" fill="#2a2"/></svg>
<svg class="a" style="left:1008px;top:67px" width="22" height="22" viewBox="0 0 24 24" ><path d="M3,8 q9,-9 18,0" fill="#6a88c8" stroke="#224" stroke-width="1"/><circle cx="12" cy="15" r="7" fill="#f8d040" stroke="#b80" stroke-width=".6"/><circle cx="9.5" cy="13" r="1" fill="#333"/><circle cx="14.5" cy="13" r="1" fill="#333"/><path d="M9,17 q3,3 6,0" stroke="#a33" stroke-width="1.2" fill="none"/></svg>
<svg class="a" style="left:1051px;top:67px" width="22" height="22" viewBox="0 0 24 24" ><path d="M3,14 l9,-5 l9,5 l-9,5z" fill="#e0e8f8" stroke="#555" stroke-width=".8"/><path d="M12,14 V2" stroke="#25d" stroke-width="2"/><path d="M12,14 l7,-6" stroke="#2a2" stroke-width="2"/><path d="M12,14 l6,7" stroke="#d22" stroke-width="2"/><circle cx="12" cy="14" r="1.6" fill="#999"/></svg>
<svg class="a" style="left:1078px;top:67px" width="22" height="22" viewBox="0 0 24 24" ><path d="M8,12 l8,-4 l6,3 l-8,4z" fill="#e0e8f8" stroke="#555" stroke-width=".8"/><path d="M14,10 V2" stroke="#25d" stroke-width="1.6"/><path d="M4,21 l8,-8" stroke="#3b3" stroke-width="3"/><rect x="11" y="15" width="9" height="6" fill="#ddd" stroke="#555" stroke-width=".8"/></svg>
<svg class="a" style="left:1103px;top:67px" width="22" height="22" viewBox="0 0 24 24" ><path d="M8,12 l8,-4 l6,3 l-8,4z" fill="#e0e8f8" stroke="#555" stroke-width=".8"/><path d="M14,10 V2" stroke="#25d" stroke-width="1.6"/><path d="M4,12 l6,8 M4,20 l6,-8" stroke="#3b3" stroke-width="3"/></svg>
<svg class="a" style="left:1145px;top:67px" width="22" height="22" viewBox="0 0 24 24" ><rect x="2" y="3" width="7" height="6" fill="#0cf"/><rect x="9" y="3" width="7" height="6" fill="#ee0"/><rect x="16" y="3" width="6" height="6" fill="#0c0"/><rect x="2" y="9" width="7" height="6" fill="#f80"/><rect x="9" y="9" width="7" height="6" fill="#a60"/><rect x="16" y="9" width="6" height="6" fill="#f0f"/><rect x="2" y="15" width="7" height="6" fill="#00d"/><rect x="9" y="15" width="7" height="6" fill="#0a0"/><rect x="16" y="15" width="6" height="6" fill="#888"/></svg>
<svg class="a" style="left:1171px;top:67px" width="22" height="22" viewBox="0 0 24 24" ><rect x="4" y="2" width="16" height="20" fill="#f4f4f4" stroke="#667" stroke-width="1"/><rect x="6" y="5" width="12" height="3" fill="#ffd080"/><rect x="7" y="10" width="3" height="3" fill="#e3e"/><rect x="11" y="10" width="3" height="3" fill="#3c3"/><rect x="15" y="10" width="3" height="3" fill="#3cf"/><rect x="7" y="15" width="3" height="3" fill="#00d"/><rect x="11" y="15" width="3" height="3" fill="#f80"/><rect x="15" y="15" width="3" height="3" fill="#888"/></svg>
<svg class="a" style="left:1198px;top:67px" width="22" height="22" viewBox="0 0 24 24" ><circle cx="12" cy="12" r="10" fill="#5a8a40" stroke="#344" stroke-width="1"/><circle cx="12" cy="12" r="7.5" fill="#8ab060"/><path d="M7,17 l10,-10 M7,7 l10,10" stroke="#eee" stroke-width="2.5"/></svg>
<svg class="a" style="left:1224px;top:67px" width="22" height="22" viewBox="0 0 24 24" ><rect x="2" y="3" width="20" height="18" fill="#e8f0fa" stroke="#445" stroke-width="1"/><rect x="2" y="3" width="20" height="4" fill="#4a7ac8"/><path d="M7,19 l10,-10 M7,9 l10,10" stroke="#5a7ab8" stroke-width="2"/><path d="M4,9 v10" stroke="#c80" stroke-dasharray="1.5 1.5"/></svg>
<svg class="a" style="left:1250px;top:67px" width="22" height="22" viewBox="0 0 24 24" ><rect x="2" y="3" width="20" height="18" fill="none" stroke="#224" stroke-width="1.2" stroke-dasharray="2 2"/><path d="M6,14 q2,-8 10,-9 l5,2 l-4,8 z" fill="#e8b060" stroke="#a70" stroke-width=".8"/><circle cx="6" cy="17" r="2.5" fill="#dd0"/></svg>
<svg class="a" style="left:1276px;top:67px" width="22" height="22" viewBox="0 0 24 24" ><path d="M4,6 l16,-2 l1,14 l-18,3z" fill="#d03030" stroke="#2a4aa8" stroke-width="2"/><path d="M8,5 l-2,15 M12,5 l-1,15 M16,4 l0,15 M3,10 l18,-2 M3,15 l18,-2" stroke="#f8a0a0" stroke-width=".8"/></svg>
<div class="a" style="left:60px;top:109px;width:1860px;height:892px;background:linear-gradient(#02021a 0%,#090e2a 13.6%,#1a2444 36%,#2e4364 65%,#47658c 100%)"></div>
<svg class="a" style="left:0;top:0" width="1920" height="1048" viewBox="0 0 1920 1048">
<defs>
<linearGradient id="gside" x1="0" x2="1" y1="0" y2="0"><stop offset="0" stop-color="#006a6a"/><stop offset="0.45" stop-color="#008080"/><stop offset="0.75" stop-color="#005555"/><stop offset="1" stop-color="#002a2a"/></linearGradient>
<linearGradient id="ginner" x1="0" x2="1" y1="0" y2="0"><stop offset="0" stop-color="#002e2e"/><stop offset="0.5" stop-color="#007070"/><stop offset="0.8" stop-color="#008080"/><stop offset="1" stop-color="#006868"/></linearGradient>
<linearGradient id="ghole" x1="0" x2="1" y1="0" y2="0"><stop offset="0" stop-color="#6a6a6a"/><stop offset="0.2" stop-color="#ffffff"/><stop offset="0.7" stop-color="#e8e8e8"/><stop offset="1" stop-color="#a0a0a0"/></linearGradient>
<linearGradient id="gph" x1="0" x2="0" y1="0" y2="1"><stop offset="0" stop-color="#3a3a4a"/><stop offset="1" stop-color="#9898b8"/></linearGradient>
<linearGradient id="grh" x1="0" x2="0" y1="0" y2="1"><stop offset="0" stop-color="#5a2a2a"/><stop offset="1" stop-color="#d86a6a"/></linearGradient>
<linearGradient id="glh" x1="0" x2="0" y1="0" y2="1"><stop offset="0" stop-color="#444"/><stop offset="1" stop-color="#eee"/></linearGradient>
<linearGradient id="gwh" x1="0" x2="1" y1="0" y2="0"><stop offset="0" stop-color="#777"/><stop offset="0.5" stop-color="#fff"/><stop offset="1" stop-color="#ddd"/></linearGradient>
</defs>
<g stroke="#000" stroke-width="1.5" stroke-linejoin="round">
<!-- base plate -->
<polygon points="614.3,761.5 981.4,710.5 1238.2,757.7 871.1,808.7" fill="#bebebe"/>
<polygon points="614.3,761.5 871.1,808.7 872.5,844.9 615.7,797.7" fill="#e4e4e4"/>
<polygon points="871.1,808.7 1238.2,757.7 1239.2,794.9 872.5,844.9" fill="#8e8e8e"/>
<!-- lower block gray right face -->
<polygon points="845.3,686.3 1212.5,636.3 1216.3,753.9 849.1,803.9" fill="#8e8e8e"/>
<!-- cavity back -->
<polygon points="673.7,654.4 805,678.8 808.9,797.3 676.8,772.9" fill="#8e8e8e" stroke="none"/>
<!-- base top strip in cavity -->
<polygon points="676.8,765 806,789 808.9,797.3 676.8,772.9" fill="#c6c6c6" stroke="none"/>
<!-- ejector plate top -->
<polygon points="676.8,714.8 806,737.7 806,700.3 676.8,713.3" fill="#a0a0b2" stroke-width="0.8"/>
<!-- ejector plates front -->
<polygon points="676.8,714.8 806,737.7 806,789 676.8,765" fill="#c4c4d8" stroke-width="0.8"/>
<line x1="676.8" y1="736" x2="806" y2="759" stroke-width="0.8"/>
<!-- right pillar -->
<polygon points="805,678.8 845.3,686.3 849.1,804.7 808.9,797.3" fill="#e4e4e4"/>
<!-- left pillar -->
<polygon points="632,646.7 673.7,654.4 676.8,772.9 635.3,765.1" fill="#e4e4e4"/>
<!-- red block -->
<polygon points="627.7,498.6 841,537.3 845.3,686.3 632,646.7" fill="#e57373"/>
<polygon points="841,537.3 1207.7,486.7 1212.5,636.3 845.3,686.3" fill="#8b4848"/>
<!-- purple block -->
<polygon points="623,350 836.7,389.5 841,537.3 627.7,498.6" fill="#a4a4c5"/>
<polygon points="836.7,389.5 1203.4,346 1207.7,486.7 841,537.3" fill="#636379"/>
<!-- top plate -->
<polygon points="599.6,309.1 964.8,259.7 1223.5,306.2 856.3,356.3" fill="#bebebe"/>
<polygon points="599.6,309.1 856.3,356.3 857.3,393 600.5,345.8" fill="#e4e4e4"/>
<polygon points="856.3,356.3 1223.5,306.2 1224.4,343.5 857.3,393" fill="#8e8e8e"/>
</g>
<!-- top plate holes -->
<g stroke="#000" stroke-width="0.9">
<ellipse cx="731.8" cy="305" rx="17.4" ry="2.7" fill="url(#ghole)"/>
<ellipse cx="1090.5" cy="311" rx="17.4" ry="2.7" fill="url(#ghole)"/>
<ellipse cx="902.7" cy="336.5" rx="17.4" ry="2.7" fill="url(#ghole)"/>
<ellipse cx="920.5" cy="278.5" rx="17.4" ry="2.7" fill="url(#ghole)"/>
</g>
<!-- teal ring -->
<g stroke="#000" stroke-width="1.1" transform="rotate(-1.9 929.6 291)">
<path d="M854.3,291 L854.3,305 A75.3,12.5 0 0 0 1004.9,305 L1004.9,291 Z" fill="url(#gside)"/>
<ellipse cx="929.6" cy="291" rx="75.3" ry="12.2" fill="#006464"/>
<ellipse cx="929.3" cy="290.6" rx="54.2" ry="8" fill="url(#ginner)"/>
<ellipse cx="929.3" cy="290.6" rx="58" ry="10" fill="none" stroke-width="0.7" stroke-dasharray="6 3"/>
</g>
<!-- face holes -->
<ellipse cx="731.5" cy="444" rx="7" ry="11.5" fill="url(#gph)" stroke="#000" stroke-width="1"/>
<ellipse cx="736.5" cy="593" rx="7" ry="11.5" fill="url(#grh)" stroke="#000" stroke-width="1"/>
<!-- latches -->
<g stroke="#000" stroke-width=".9">
<path d="M715.5,482.8 L751.5,490.3 Q754.3,490.9 754.5,494 L756.3,550.5 Q756.3,553.7 753.3,553.2 L716.5,547.3 Q713.5,547 713.5,544 L712.8,485.8 Q712.8,482.5 715.5,482.8 Z" fill="#a4a4c5"/>
<path d="M715.5,482.8 L751.5,490.3 Q754.3,490.9 754.5,494 L755,520 L741.5,517.5 L741.5,507 L726.8,504.5 L726.8,515 L713,512.5 L712.8,485.8 Q712.8,482.5 715.5,482.8 Z" fill="#e4e4e4"/>
<ellipse cx="719" cy="499.5" rx="4.5" ry="8" fill="url(#glh)"/>
<ellipse cx="748.2" cy="505" rx="4.5" ry="8" fill="url(#glh)"/>
<ellipse cx="720.2" cy="531.6" rx="4.5" ry="8" fill="url(#gph)"/>
<ellipse cx="748.9" cy="537" rx="4.5" ry="8" fill="url(#gph)"/>
<path d="M996.5,484.2 L1051,477.5 Q1054,477.2 1054.2,480.5 L1056,536 Q1056,539.2 1053,539.5 L998,547.2 Q995.1,547.5 995,544.5 L993.5,487.5 Q993.5,484.5 996.5,484.2 Z" fill="#636379"/>
<path d="M996.5,484.2 L1051,477.5 Q1054,477.2 1054.2,480.5 L1055,508 L1035.2,510.5 L1035.2,499 L1013.3,501.5 L1013.3,513 L994.2,515.5 L993.5,487.5 Q993.5,484.5 996.5,484.2 Z" fill="#8e8e8e"/>
<ellipse cx="1003" cy="499" rx="6" ry="7.5" fill="url(#gwh)"/><ellipse cx="1004.5" cy="499.5" rx="3" ry="4.5" fill="none" stroke-width=".7"/>
<ellipse cx="1044.6" cy="493.3" rx="6" ry="7.5" fill="url(#gwh)"/><ellipse cx="1046" cy="494" rx="3" ry="4.5" fill="none" stroke-width=".7"/>
<ellipse cx="1004" cy="531.9" rx="6" ry="7.5" fill="#c8c8e0"/><ellipse cx="1005.5" cy="532.5" rx="3" ry="4.5" fill="none" stroke-width=".7"/>
<ellipse cx="1046" cy="526" rx="6" ry="7.5" fill="#c8c8e0"/><ellipse cx="1047.5" cy="526.5" rx="3" ry="4.5" fill="none" stroke-width=".7"/>
</g>
<!-- blue dimension marks -->
<g stroke="#1a8ad4" stroke-width="1.6" fill="none"><path d="M674.5,494 v4 M676,496 h-2 M683,497 l5,1.5 h4 M696,496 v5"/></g>
<!-- springs & cylinder -->
<defs><linearGradient id="gspr" x1="0" x2="1"><stop offset="0" stop-color="#d8d8e8"/><stop offset=".6" stop-color="#c0c0d4"/><stop offset="1" stop-color="#707080"/></linearGradient>
<linearGradient id="ggrn" x1="0" x2="1"><stop offset="0" stop-color="#5aa868"/><stop offset=".4" stop-color="#78c482"/><stop offset="1" stop-color="#3a7a4a"/></linearGradient></defs>
<clipPath id="cav"><polygon points="673.7,654.4 805,678.8 806,737.7 676.8,714.8"/></clipPath>
<g clip-path="url(#cav)">
<rect x="700.5" y="655" width="45.5" height="59" fill="#b8b8c8"/>
<clipPath id="sprc"><rect x="700" y="650" width="47" height="64.5"/></clipPath><g clip-path="url(#sprc)"><polygon points="700.5,666.0 713,666.0 746,659.0 746,666.0 713,673.0 700.5,673.0" fill="url(#gspr)" stroke="#000" stroke-width="0.9"/><polygon points="712.5,666.5 736,661.5 736,666.0 712.5,671.0" fill="#f4ec00"/><polygon points="700.5,676.8 713,676.8 746,669.8 746,676.8 713,683.8 700.5,683.8" fill="url(#gspr)" stroke="#000" stroke-width="0.9"/><polygon points="712.5,677.3 736,672.3 736,676.8 712.5,681.8" fill="#f4ec00"/><polygon points="700.5,687.6 713,687.6 746,680.6 746,687.6 713,694.6 700.5,694.6" fill="url(#gspr)" stroke="#000" stroke-width="0.9"/><polygon points="712.5,688.1 736,683.1 736,687.6 712.5,692.6" fill="#f4ec00"/><polygon points="700.5,698.4 713,698.4 746,691.4 746,698.4 713,705.4 700.5,705.4" fill="url(#gspr)" stroke="#000" stroke-width="0.9"/><polygon points="712.5,698.9 736,693.9 736,698.4 712.5,703.4" fill="#f4ec00"/><polygon points="700.5,709.2 713,709.2 746,702.2 746,709.2 713,716.2 700.5,716.2" fill="url(#gspr)" stroke="#000" stroke-width="0.9"/><polygon points="712.5,709.7 736,704.7 736,709.2 712.5,714.2" fill="#f4ec00"/><polygon points="700.5,720.0 713,720.0 746,713.0 746,720.0 713,727.0 700.5,727.0" fill="url(#gspr)" stroke="#000" stroke-width="0.9"/><polygon points="712.5,720.5 736,715.5 736,720.0 712.5,725.0" fill="#f4ec00"/></g>
<ellipse cx="771" cy="714" rx="16" ry="3" fill="none" stroke="#111" stroke-width="1.2"/>
<rect x="757" y="668" width="9" height="46" fill="#c8c8d8"/>
<path d="M759,670 v43 q12.5,3 25,0 v-43z" fill="url(#ggrn)" stroke="#111" stroke-width=".9"/>
<path d="M759,678 q12.5,3 25,0 M759,699 q12.5,3 25,0 M759,703 q12.5,3 25,0" stroke="#111" stroke-width=".9" fill="none"/>
<rect x="784" y="672" width="3" height="42" fill="#707080"/>
<rect x="790" y="676" width="15" height="62" fill="#c8c8d8"/>
<g fill="none" stroke="#111" stroke-width=".9"><path d="M793,687 h12 M793,698 h12 M793,709 h12 M793,719 h12 M793,728 h12"/></g>
<g fill="none" stroke="#7a7a40" stroke-width="1.8"><path d="M791.5,677 v32 M791.5,684 h13 M791.5,695 h13 M791.5,706 h13"/></g>
</g>
<!-- watermark -->
<g>
<defs><linearGradient id="gwm" x1="0" x2="0" y1="0" y2="1"><stop offset="0" stop-color="#f05a10"/><stop offset="1" stop-color="#f8b020"/></linearGradient>
<linearGradient id="gwt" x1="0" x2="0" y1="0" y2="1"><stop offset="0" stop-color="#f07010"/><stop offset="1" stop-color="#f8a030"/></linearGradient></defs>
<g fill="url(#gwm)">
<path d="M891,516 h2.2 v20 q8,0 14,3 h-16z M896,511 h2.2 v25 q5,0 9,2 l-2,1 q-5,-1 -9,-1z M901,507 h2.2 v29 l-2.2,1z M928,507 h2.2 v30 l-2.2,-1z M933,511 h2.2 v27 q-4,0 -9,1 l-2,-1 q6,-2 8.8,-2z M938,516 h2.2 v23 h-16 q6,-3 13.8,-3z"/>
<path d="M906,539 h18 v2 h-18z"/>
<path d="M917,509 q-11,2 -11,14 q0,9 7,10 q-4,-5 -2,-12 q2,-7 6,-12z" />
<path d="M914,536 q11,-2 11,-14 q0,-7 -4,-9 q2,8 -2,15 q-2,5 -5,8z" fill="#f8c030"/>
</g>
<text x="946" y="530" font-size="17" font-weight="bold" fill="url(#gwt)" font-family="Liberation Sans, sans-serif" textLength="83">智造资料网</text>
<text x="947" y="539" font-size="5" font-weight="bold" fill="#f08a20" font-family="Liberation Sans, sans-serif" textLength="82">INTELLIGENT MANUFACTURING DATA</text>
</g>
</svg>
<div class="a" style="left:64px;top:113px;width:24px;height:24px;background:#8a8a9a;"></div>
<svg class="a" style="left:65px;top:114px" width="22" height="22" viewBox="0 0 24 24" ><rect x="3" y="4" width="18" height="3.6" rx="1.5" fill="#4a64a0"/><rect x="3" y="10.2" width="18" height="3.6" rx="1.5" fill="#4a64a0"/><rect x="3" y="16.4" width="18" height="3.6" rx="1.5" fill="#4a64a0"/></svg>
<div class="a" style="left:92px;top:113px;width:24px;height:24px;background:#8a8a9a;"></div>
<svg class="a" style="left:93px;top:114px" width="22" height="22" viewBox="0 0 24 24" ><defs><linearGradient id="gfr" x1="0" y1="0" x2="1" y2="1"><stop offset="0" stop-color="#fffff0"/><stop offset="1" stop-color="#9ab8f0"/></linearGradient></defs><rect x="6" y="7" width="12" height="10" fill="url(#gfr)" stroke="#333" stroke-width=".9"/><path d="M3,3 l4,4 M21,3 l-4,4 M3,21 l4,-4 M21,21 l-4,-4" stroke="#3c3" stroke-width="2.6"/></svg>
<div class="a" style="left:120px;top:113px;width:24px;height:24px;background:#8a8a9a;"></div>
<svg class="a" style="left:121px;top:114px" width="22" height="22" viewBox="0 0 24 24" ><circle cx="13" cy="11" r="6" fill="#c8d8f0" stroke="#667" stroke-width="1.4"/><path d="M9,15 l-6,6" stroke="#888" stroke-width="3"/><path d="M3,5 h6 M2,8 h6" stroke="#ccd" stroke-width="1.5"/></svg>
<div class="a" style="left:148px;top:113px;width:24px;height:24px;background:#8a8a9a;"></div>
<svg class="a" style="left:149px;top:114px" width="22" height="22" viewBox="0 0 24 24" ><path d="M2,15 l10,-6 l10,6 l-10,6z" fill="#99a" stroke="#555" stroke-width=".6"/><path d="M12,15 V2" stroke="#25d" stroke-width="2"/><path d="M12,15 l8,-6" stroke="#2a2" stroke-width="2"/><path d="M12,15 l7,7" stroke="#d22" stroke-width="2"/><circle cx="12" cy="15" r="1.6" fill="#ddd"/></svg>
<div class="a" style="left:176px;top:113px;width:24px;height:24px;background:#8a8a9a"></div>
<svg class="a" style="left:176px;top:113px" width="24" height="24" viewBox="0 0 24 24" ><polygon points="3.3,6.5 12.5,3.3 21.6,6.3 12.5,11" fill="#48d048" stroke="#1a9a1a" stroke-width="1"/><path d="M3.3,6.5 L12.5,3.3 L21.6,6.3 L21.5,16.3 L12.5,21.4 L3.3,16.2 Z M12.5,3.3 L12.5,11 L3.3,6.5 M21.6,6.3 L12.5,11 L3.3,16.2 M21.5,16.3 L12.5,11 L12.5,21.4" fill="none" stroke="#111" stroke-width="1.3" stroke-linejoin="round"/><polygon points="3.3,6.5 12.5,3.3 21.6,6.3 12.5,11" fill="#48d048" stroke="none"/><path d="M3.3,6.5 L12.5,3.3 L21.6,6.3 L12.5,11 Z" fill="none" stroke="#1a9a1a" stroke-width="1.2"/></svg>
<div class="a" style="left:204px;top:113px;width:24px;height:24px;background:#8a8a9a"></div>
<svg class="a" style="left:204px;top:113px" width="24" height="24" viewBox="0 0 24 24" ><polygon points="3.3,16.2 12.5,11 21.5,16.3 12.5,21.4" fill="#48d048" stroke="#1a9a1a" stroke-width="1"/><path d="M3.3,6.5 L12.5,3.3 L21.6,6.3 L21.5,16.3 L12.5,21.4 L3.3,16.2 Z M12.5,3.3 L12.5,11 L3.3,6.5 M21.6,6.3 L12.5,11 L3.3,16.2 M21.5,16.3 L12.5,11 L12.5,21.4" fill="none" stroke="#111" stroke-width="1.3" stroke-linejoin="round"/></svg>
<div class="a" style="left:232px;top:113px;width:24px;height:24px;background:#8a8a9a"></div>
<svg class="a" style="left:232px;top:113px" width="24" height="24" viewBox="0 0 24 24" ><polygon points="3.3,6.5 12.5,3.3 12.5,11 3.3,16.2" fill="#48d048" stroke="#1a9a1a" stroke-width="1"/><path d="M3.3,6.5 L12.5,3.3 L21.6,6.3 L21.5,16.3 L12.5,21.4 L3.3,16.2 Z M12.5,3.3 L12.5,11 L3.3,6.5 M21.6,6.3 L12.5,11 L3.3,16.2 M21.5,16.3 L12.5,11 L12.5,21.4" fill="none" stroke="#111" stroke-width="1.3" stroke-linejoin="round"/></svg>
<div class="a" style="left:260px;top:113px;width:24px;height:24px;background:#8a8a9a"></div>
<svg class="a" style="left:260px;top:113px" width="24" height="24" viewBox="0 0 24 24" ><polygon points="12.5,11 21.6,6.3 21.5,16.3 12.5,21.4" fill="#48d048" stroke="#1a9a1a" stroke-width="1"/><path d="M3.3,6.5 L12.5,3.3 L21.6,6.3 L21.5,16.3 L12.5,21.4 L3.3,16.2 Z M12.5,3.3 L12.5,11 L3.3,6.5 M21.6,6.3 L12.5,11 L3.3,16.2 M21.5,16.3 L12.5,11 L12.5,21.4" fill="none" stroke="#111" stroke-width="1.3" stroke-linejoin="round"/><polygon points="12.5,11 21.6,6.3 21.5,16.3 12.5,21.4" fill="#48d048" stroke="none"/><path d="M12.5,11 L21.6,6.3 L21.5,16.3 L12.5,21.4 Z" fill="none" stroke="#1a9a1a" stroke-width="1.2"/></svg>
<div class="a" style="left:288px;top:113px;width:24px;height:24px;background:#8a8a9a"></div>
<svg class="a" style="left:288px;top:113px" width="24" height="24" viewBox="0 0 24 24" ><polygon points="3.3,6.5 12.5,11 12.5,21.4 3.3,16.2" fill="#48d048" stroke="#1a9a1a" stroke-width="1"/><path d="M3.3,6.5 L12.5,3.3 L21.6,6.3 L21.5,16.3 L12.5,21.4 L3.3,16.2 Z M12.5,3.3 L12.5,11 L3.3,6.5 M21.6,6.3 L12.5,11 L3.3,16.2 M21.5,16.3 L12.5,11 L12.5,21.4" fill="none" stroke="#111" stroke-width="1.3" stroke-linejoin="round"/><polygon points="3.3,6.5 12.5,11 12.5,21.4 3.3,16.2" fill="#48d048" stroke="none"/><path d="M3.3,6.5 L12.5,11 L12.5,21.4 L3.3,16.2 Z" fill="none" stroke="#1a9a1a" stroke-width="1.2"/></svg>
<div class="a" style="left:316px;top:113px;width:24px;height:24px;background:#8a8a9a"></div>
<svg class="a" style="left:316px;top:113px" width="24" height="24" viewBox="0 0 24 24" ><polygon points="12.5,3.3 21.6,6.3 21.5,16.3 12.5,11" fill="#48d048" stroke="#1a9a1a" stroke-width="1"/><path d="M3.3,6.5 L12.5,3.3 L21.6,6.3 L21.5,16.3 L12.5,21.4 L3.3,16.2 Z M12.5,3.3 L12.5,11 L3.3,6.5 M21.6,6.3 L12.5,11 L3.3,16.2 M21.5,16.3 L12.5,11 L12.5,21.4" fill="none" stroke="#111" stroke-width="1.3" stroke-linejoin="round"/></svg>
<div class="a" style="left:344px;top:113px;width:24px;height:24px;background:#8a8a9a"></div>
<svg class="a" style="left:344px;top:113px" width="24" height="24" viewBox="0 0 24 24" ><polygon points="3.3,6.5 12.5,3.3 21.6,6.3 21.5,16.3 12.5,21.4 3.3,16.2" fill="#40c840" stroke="#108010" stroke-width="1.2"/><polygon points="3.3,6.5 12.5,3.3 21.6,6.3 12.5,11" fill="#58d858"/><polygon points="12.5,11 21.6,6.3 21.5,16.3 12.5,21.4" fill="#78ec68"/><path d="M3.3,6.5 L12.5,11 L21.6,6.3 M12.5,11 L12.5,21.4" stroke="#108010" stroke-width="1" fill="none"/></svg>
<div class="a" style="left:64px;top:141px;width:24px;height:24px;background:#8a8a9a;"></div>
<svg class="a" style="left:65px;top:142px" width="22" height="22" viewBox="0 0 24 24" ><g transform="translate(2,1) scale(.85)"><path d="M7,5 v13 a5,2.2 0 0 0 10,0 v-13" fill="#888896" stroke="#222" stroke-width="1"/><ellipse cx="12" cy="5" rx="5" ry="2.2" fill="#888896" stroke="#222" stroke-width="1"/></g></svg>
<div class="a" style="left:64px;top:169px;width:24px;height:24px;background:#8a8a9a;"></div>
<svg class="a" style="left:65px;top:170px" width="22" height="22" viewBox="0 0 24 24" ><g transform="translate(2,1) scale(.85)"><path d="M7,5 v13 a5,2.2 0 0 0 10,0 v-13" fill="#888896" stroke="#222" stroke-width="1"/><ellipse cx="12" cy="5" rx="5" ry="2.2" fill="#888896" stroke="#222" stroke-width="1"/></g></svg>
<div class="a" style="left:64px;top:197px;width:24px;height:24px;background:#a89060;border:1px solid #f0d040;"></div>
<svg class="a" style="left:65px;top:198px" width="22" height="22" viewBox="0 0 24 24" ><defs><linearGradient id="cb2" x1="0" x2="1"><stop offset="0" stop-color="#3a5aaa"/><stop offset=".5" stop-color="#8ab0f0"/><stop offset="1" stop-color="#3a5aaa"/></linearGradient></defs><g transform="translate(2,1) scale(.85)"><path d="M7,5 v13 a5,2.2 0 0 0 10,0 v-13" fill="url(#cb2)" stroke="#223" stroke-width="1"/><ellipse cx="12" cy="5" rx="5" ry="2.2" fill="#a8c0f0" stroke="#223" stroke-width="1"/></g></svg>
<div class="a" style="left:64px;top:225px;width:24px;height:24px;background:#8a8a9a;"></div>
<svg class="a" style="left:65px;top:226px" width="22" height="22" viewBox="0 0 24 24" ><g transform="translate(2,1) scale(.85)"><path d="M7,5 v13 a5,2.2 0 0 0 10,0 v-13" fill="#e8ecf8" stroke="#333" stroke-width="1"/><ellipse cx="12" cy="5" rx="5" ry="2.2" fill="#e8ecf8" stroke="#333" stroke-width="1"/></g></svg>
<div class="a" style="left:64px;top:253px;width:24px;height:24px;background:#8a8a9a;"></div>
<svg class="a" style="left:65px;top:254px" width="22" height="22" viewBox="0 0 24 24" ><g transform="translate(2,1) scale(.85)"><path d="M7,5 v13 a5,2.2 0 0 0 10,0 v-13" fill="#888896" stroke="#222" stroke-width="1"/><ellipse cx="12" cy="5" rx="5" ry="2.2" fill="#888896" stroke="#222" stroke-width="1"/><path d="M9,6 l4,13 M12,7 l-3,10 M14,6 l1,12" stroke="#222" stroke-width=".8"/></g></svg>
<svg class="a" style="left:100px;top:850px" width="80" height="110" viewBox="0 0 80 110" >
<text x="12.5" y="15" font-size="11" fill="#e0e0e0" font-family="Liberation Sans">Z</text>
<path d="M18.3,90 L17.8,26" stroke="#20e0e8" stroke-width="2.5"/>
<path d="M13.5,29 L17.7,17 L22,29 Z" fill="#20e0e8"/>
<path d="M20,62 h20 v26 M20,64 l10,-2 h10 M30,62 v24 M20,64 v24" fill="rgba(220,220,220,.25)" stroke="#d0d0d0" stroke-width=".8"/>
<path d="M21,90 L58,86" stroke="#12a012" stroke-width="3"/>
<path d="M55,82 L64,86 L55,90 Z" fill="#12a012"/>
<path d="M30,92 L48,91" stroke="#e8e000" stroke-width="1.5"/>
<path d="M21,90 L36,94" stroke="#e01010" stroke-width="3"/>
<circle cx="38" cy="94" r="3" fill="#e01010"/>
<circle cx="19.5" cy="92" r="3.6" fill="#888"/>
<text x="62" y="90" font-size="11" fill="#e01010" font-family="Liberation Sans">Y</text>
<text x="39.5" y="101.5" font-size="10" fill="#d0d0d0" font-family="Liberation Sans">X</text>
</svg>
<div class="a" style="left:1px;top:122px;width:57px;height:2px;background:repeating-linear-gradient(90deg,#fff 0 1px,#a4a8b4 1px 3px,transparent 3px 4px)"></div>
<div class="a" style="left:1px;top:374px;width:57px;height:2px;background:repeating-linear-gradient(90deg,#fff 0 1px,#a4a8b4 1px 3px,transparent 3px 4px)"></div>
<svg class="a" style="left:6px;top:132px" width="22" height="22" viewBox="0 0 24 24" ><circle cx="14" cy="11" r="6" fill="#dde8f8" stroke="#99a" stroke-width="1.4"/><path d="M10,15 l-6,5" stroke="#aaa" stroke-width="3"/><path d="M2,8 h6 M2,11 h5" stroke="#ccd" stroke-width="1.5"/></svg>
<svg class="a" style="left:32px;top:132px" width="22" height="22" viewBox="0 0 24 24" ><path d="M2,4 l16,16" stroke="#3a6ad0" stroke-width="2" stroke-dasharray="3 2"/><path d="M8,20 l12,-14 l2,2 l-12,14 l-3,1z" fill="#f0a030" stroke="#333" stroke-width=".8"/><path d="M18,2 h6 l-3,3z" fill="#000"/></svg>
<svg class="a" style="left:6px;top:157px" width="22" height="22" viewBox="0 0 24 24" ><rect x="5" y="6" width="14" height="12" fill="#e8f0ff" stroke="#889" stroke-width=".8"/><path d="M2,3 l4,4 M22,3 l-4,4 M2,21 l4,-4 M22,21 l-4,-4" stroke="#3b3" stroke-width="2"/></svg>
<svg class="a" style="left:32px;top:157px" width="22" height="22" viewBox="0 0 24 24" ><circle cx="10" cy="14" r="6" fill="none" stroke="#3a6ad0" stroke-width="2"/><path d="M8,20 l12,-14 l2,2 l-12,14 l-3,1z" fill="#f0a030" stroke="#333" stroke-width=".8"/><path d="M18,2 h6 l-3,3z" fill="#000"/></svg>
<svg class="a" style="left:6px;top:184px" width="22" height="22" viewBox="0 0 24 24" ><path d="M3,4 v4 M1,6 h4" stroke="#222" stroke-width="1"/><circle cx="12" cy="10" r="6" fill="#c8d8f0" stroke="#666" stroke-width="1.5"/><path d="M8,15 l-6,6" stroke="#777" stroke-width="3"/><g transform="translate(10,10) scale(.5)"><path d="M12,3 l8,4 v10 l-8,4 l-8,-4 v-10z" fill="#999" stroke="#333" stroke-width=".8"/><path d="M12,3 l8,4 l-8,4 l-8,-4z" fill="#ccc" stroke="#333" stroke-width=".8"/><path d="M12,11 v10 l8,-4 v-10z" fill="#555" stroke="#333" stroke-width=".8"/></g></svg>
<svg class="a" style="left:32px;top:184px" width="22" height="22" viewBox="0 0 24 24" ><rect x="3" y="5" width="16" height="15" fill="#f8f8e0" stroke="#e8d000" stroke-width="2"/><path d="M6,12 l4,5 l9,-11" stroke="#3b3" stroke-width="3" fill="none"/><path d="M18,2 h6 l-3,3z" fill="#000"/></svg>
<svg class="a" style="left:6px;top:209px" width="22" height="22" viewBox="0 0 24 24" ><path d="M3,14 l9,-5 l9,5 l-9,5z" fill="#e0e8f8" stroke="#555" stroke-width=".8"/><path d="M12,14 V2" stroke="#25d" stroke-width="2"/><path d="M12,14 l7,-6" stroke="#2a2" stroke-width="2"/><path d="M12,14 l6,7" stroke="#d22" stroke-width="2"/><circle cx="12" cy="14" r="1.6" fill="#999"/></svg>
<svg class="a" style="left:32px;top:209px" width="22" height="22" viewBox="0 0 24 24" ><path d="M3,16 q4,-14 8,-2 q4,12 8,-4" fill="none" stroke="#3a6ad0" stroke-width="2"/><path d="M8,20 l12,-14 l2,2 l-12,14 l-3,1z" fill="#f0a030" stroke="#333" stroke-width=".8"/><path d="M18,2 h6 l-3,3z" fill="#000"/></svg>
<svg class="a" style="left:6px;top:235px" width="22" height="22" viewBox="0 0 24 24" ><path d="M3,6 h12 l2,3 h-14z" fill="#8a9ae8"/><path d="M3,9 h14 v2 h-14z" fill="#ddd" stroke="#666" stroke-width=".5"/><ellipse cx="12" cy="17" rx="8" ry="4.5" fill="#a07050" stroke="#543" stroke-width=".7"/><circle cx="9" cy="17" r="1.8" fill="#23d"/><circle cx="13" cy="18" r="1.8" fill="#2a2"/><circle cx="15" cy="15" r="1.8" fill="#d22"/><path d="M13,14 l7,-10" stroke="#b07030" stroke-width="2"/></svg>
<svg class="a" style="left:32px;top:235px" width="22" height="22" viewBox="0 0 24 24" ><path d="M3,20 l5,-14 h13 l-5,14z" fill="#8ab8f0" stroke="#2a58b8" stroke-width="1.2"/><path d="M10,13 h9 M13,6 l-4,14" stroke="#e8f4ff" stroke-width="1.2"/><path d="M18,2 h6 l-3,3z" fill="#000"/></svg>
<svg class="a" style="left:6px;top:261px" width="22" height="22" viewBox="0 0 24 24" ><path d="M5,12 a7,7 0 0 1 12,-5" stroke="#4a8ae0" stroke-width="3.5" fill="none"/><path d="M15,3 l5,4 l-6,2z" fill="#4a8ae0"/><path d="M19,12 a7,7 0 0 1 -12,5" stroke="#4a8ae0" stroke-width="3.5" fill="none"/><path d="M9,21 l-5,-4 l6,-2z" fill="#4a8ae0"/></svg>
<svg class="a" style="left:32px;top:261px" width="22" height="22" viewBox="0 0 24 24" ><path d="M12,3 l8,4 v10 l-8,4 l-8,-4 v-10z" fill="#9a9a9a" stroke="#333" stroke-width=".8"/><path d="M12,3 l8,4 l-8,4 l-8,-4z" fill="#c8c8c8" stroke="#333" stroke-width=".8"/><path d="M12,11 v10 l8,-4 v-10z" fill="#6a6a6a" stroke="#333" stroke-width=".8"/><path d="M18,0 h6 l-3,3z" fill="#000"/></svg>
<svg class="a" style="left:6px;top:287px" width="22" height="22" viewBox="0 0 24 24" ><text x="6" y="20" font-size="20" font-weight="bold" fill="#3a6ad0" font-family="Liberation Sans">?</text><path d="M18,2 h6 l-3,3z" fill="#000"/></svg>
<svg class="a" style="left:32px;top:287px" width="22" height="22" viewBox="0 0 24 24" ><path d="M3,4 v17 M21,4 v17 M4,8 h16" stroke="#333" stroke-width="1.5"/><path d="M4,8 h16" stroke="#e8d000" stroke-width="2"/><path d="M18,2 h6 l-3,3z" fill="#000"/></svg>
<svg class="a" style="left:6px;top:313px" width="22" height="22" viewBox="0 0 24 24" ><path d="M5,5 h14 l-2,17 h-10z" fill="#a8d0f0" stroke="#668" stroke-width="1"/><path d="M9,9 l5,8 M14,9 l-4,8" stroke="#dde050" stroke-width="2"/><path d="M18,2 h6 l-3,3z" fill="#000"/></svg>
<svg class="a" style="left:32px;top:313px" width="22" height="22" viewBox="0 0 24 24" ><path d="M7,12 a7,7 0 1 1 8,9" stroke="#aaa" stroke-width="4" fill="none"/><path d="M2,11 l6,-7 l3,8z" fill="#aaa"/><path d="M18,2 h6 l-3,3z" fill="#000"/></svg>
<svg class="a" style="left:6px;top:340px" width="22" height="22" viewBox="0 0 24 24" ><circle cx="14" cy="11" r="7" fill="none" stroke="#8a4a2a" stroke-width="1.2"/><path d="M14,2 v18 M5,11 h18 M8,5 l12,12 M20,5 l-12,12" stroke="#8a4a2a" stroke-width="1"/><circle cx="14" cy="11" r="2" fill="#f0c000"/><rect x="3" y="2" width="3" height="16" fill="#555"/><path d="M4,20 l14,-6 M4,22 l14,-5" stroke="#f88010" stroke-width="2.2"/><path d="M18,0 h6 l-3,3z" fill="#000"/></svg>
<svg class="a" style="left:32px;top:340px" width="22" height="22" viewBox="0 0 24 24" ><rect x="9" y="9" width="12" height="12" fill="#e0e8f8" stroke="#000" stroke-width="1.2"/><path d="M2,12 l2,-9 h10 l3,2 l-2,9 h-12z" fill="#f8d880" stroke="#b08a30" stroke-width=".8"/><path d="M9,4 h8 v6 h-8z" fill="#2a2"/></svg>
<div class="a" style="left:2px;top:1020px;width:1918px;height:1px;background:#a0a0a0"></div>
<div class="a" style="left:1340px;top:1002px;width:132px;height:17px;background:#fff"></div>
<svg class="a" style="left:1460px;top:1003px" width="14" height="14" viewBox="0 0 14 14" ><circle cx="8" cy="5.5" r="3.6" fill="none" stroke="#3a6ad0" stroke-width="1.4"/><path d="M5.5,8 l-4,4.5" stroke="#3a6ad0" stroke-width="1.6"/></svg>
<div class="a" style="left:1476px;top:1003px;width:2px;height:16px;background:repeating-linear-gradient(#fff 0 1px,#a4a8b4 1px 3px,transparent 3px 4px)"></div>
<div class="a t" style="left:1487px;top:1005px;font-size:12px;color:#000;font-weight:normal;">绝对 XY 上视图</div>
<div class="a" style="left:1590px;top:1003px;width:1px;height:16px;background:#a0a4b0"></div>
<div class="a t" style="left:1601px;top:1005px;font-size:12px;color:#000;font-weight:normal;">绝对视图</div>
<div class="a" style="left:1658px;top:1003px;width:2px;height:16px;background:repeating-linear-gradient(#fff 0 1px,#a4a8b4 1px 3px,transparent 3px 4px)"></div>
<div class="a t" style="left:1668px;top:1005px;font-size:12px;color:#000;font-weight:bold;">LAYER0</div>
<div class="a" style="left:1726px;top:1003px;width:1px;height:16px;background:#a0a4b0"></div>
<div class="a" style="left:1758px;top:1003px;width:1px;height:16px;background:#a0a4b0"></div>
<div class="a" style="left:1841px;top:1003px;width:1px;height:16px;background:#a0a4b0"></div>
<div class="a" style="left:1884px;top:1003px;width:1px;height:16px;background:#a0a4b0"></div>
<div class="a" style="left:1762px;top:1005px;width:33px;height:12px;background:#4a6898"></div>
<div class="a" style="left:1805px;top:1005px;width:33px;height:12px;background:#4a6898"></div>
<div class="a" style="left:1848px;top:1005px;width:33px;height:12px;background:#4a6898"></div>
<svg class="a" style="left:1893px;top:1003px" width="15" height="15" viewBox="0 0 15 15" ><circle cx="7.5" cy="7.5" r="7" fill="#2a68c8"/><path d="M3,4 q3,-2 5,1 q-1,3 -4,3z M9,8 q4,-1 4,3 q-3,3 -5,0z" fill="#3ab030"/></svg>
<div class="a" style="left:1132px;top:1023px;width:1px;height:16px;background:#a0a4b0"></div>
<div class="a" style="left:1176px;top:1023px;width:1px;height:16px;background:#a0a4b0"></div>
<div class="a" style="left:1205px;top:1023px;width:1px;height:16px;background:#a0a4b0"></div>
<div class="a" style="left:1236px;top:1023px;width:1px;height:16px;background:#a0a4b0"></div>
<div class="a" style="left:1268px;top:1023px;width:1px;height:16px;background:#a0a4b0"></div>
<div class="a" style="left:1298px;top:1023px;width:1px;height:16px;background:#a0a4b0"></div>
<div class="a" style="left:1330px;top:1023px;width:1px;height:16px;background:#a0a4b0"></div>
<div class="a" style="left:1361px;top:1023px;width:1px;height:16px;background:#a0a4b0"></div>
<div class="a" style="left:1391px;top:1023px;width:1px;height:16px;background:#a0a4b0"></div>
<div class="a" style="left:1580px;top:1023px;width:1px;height:16px;background:#a0a4b0"></div>
<div class="a" style="left:1654px;top:1023px;width:1px;height:16px;background:#a0a4b0"></div>
<div class="a t" style="left:1141px;top:1025px;font-size:12px;color:#000;font-weight:normal;">拴牢</div>
<svg class="a" style="left:1181px;top:1022px" width="18" height="18" viewBox="0 0 18 18" ><rect x="1" y="1" width="16" height="16" fill="#c8ccd8" stroke="#6a6e7a" stroke-width="1.4"/><path d="M4.5,9 a4.5,4.5 0 0 1 8,-2.5" stroke="#e05060" stroke-width="1.8" fill="none"/><path d="M13.5,9 a4.5,4.5 0 0 1 -8,2.5" stroke="#e05060" stroke-width="1.8" fill="none"/><path d="M11,4 l3,2.5 l-3.5,1z M7,14 l-3,-2.5 l3.5,-1z" fill="#e05060"/></svg>
<svg class="a" style="left:1212px;top:1022px" width="18" height="18" viewBox="0 0 18 18" ><rect x="0" y="0" width="18" height="18" fill="#f8e078"/><circle cx="7" cy="7" r="5" fill="#f0b020" opacity=".8"/><path d="M3,3 l8,3 l-4,4z" fill="#c040c0" opacity=".7"/><path d="M8,7 v9 l2.5,-2.5 l2,4 l1.5,-1 l-2,-4 h3.5z" fill="#e8e8f0" stroke="#555" stroke-width=".8"/></svg>
<svg class="a" style="left:1244px;top:1022px" width="18" height="18" viewBox="0 0 18 18" ><path d="M2,8 l7,-6 l7,6 v9 h-14z" fill="#a0b8e0" stroke="#445" stroke-width=".8"/><path d="M4,5 l10,-3 v6" fill="#e0a060"/></svg>
<svg class="a" style="left:1276px;top:1022px" width="16" height="18" viewBox="0 0 16 18" ><text x="2" y="15" font-size="16" font-weight="bold" fill="#3a6ad0" font-family="Liberation Sans">?</text></svg>
<svg class="a" style="left:1305px;top:1022px" width="18" height="18" viewBox="0 0 18 18" ><g transform="translate(0,-1) scale(.5)"><path d="M12,3 l8,4 v10 l-8,4 l-8,-4 v-10z" fill="#4a88d8" stroke="#333" stroke-width=".8"/><path d="M12,3 l8,4 l-8,4 l-8,-4z" fill="#8ab8f0" stroke="#333" stroke-width=".8"/><path d="M12,11 v10 l8,-4 v-10z" fill="#3a68b8" stroke="#333" stroke-width=".8"/></g><g transform="translate(6,5) scale(.55)"><path d="M12,3 l8,4 v10 l-8,4 l-8,-4 v-10z" fill="#6898a8" stroke="#333" stroke-width=".8"/><path d="M12,3 l8,4 l-8,4 l-8,-4z" fill="#a8c8d0" stroke="#333" stroke-width=".8"/><path d="M12,11 v10 l8,-4 v-10z" fill="#487888" stroke="#333" stroke-width=".8"/></g><path d="M0,13 h7 M3,10 l4,3 l-4,3" stroke="#e02020" stroke-width="1.6" fill="none"/></svg>
<div class="a" style="left:1336px;top:1022px;width:18px;height:18px;background:#f0e070"></div>
<svg class="a" style="left:1337px;top:1022px" width="17" height="17" viewBox="0 0 24 24" ><path d="M12,3 l8,4 v10 l-8,4 l-8,-4 v-10z" fill="#40a0e0" stroke="#333" stroke-width=".8"/><path d="M12,3 l8,4 l-8,4 l-8,-4z" fill="#e070f0" stroke="#333" stroke-width=".8"/><path d="M12,11 v10 l8,-4 v-10z" fill="#3080c0" stroke="#333" stroke-width=".8"/></svg>
<svg class="a" style="left:1430px;top:1022px" width="17" height="17" viewBox="0 0 17 17" ><rect x="1" y="3" width="15" height="13" fill="none" stroke="#667" stroke-width="1"/><path d="M1,9 h15 M8,3 v13" stroke="#667"/></svg>
<div class="a t" style="left:1463px;top:1025px;font-size:12px;color:#000;font-weight:normal;">LS: 1.00 PS: 1.00</div>
<div class="a t" style="left:1589px;top:1025px;font-size:12px;color:#000;font-weight:normal;">单位: 毫米</div>
<div class="a t" style="left:1663px;top:1025px;font-size:12px;color:#000;font-weight:normal;letter-spacing:0.43px">X = 0042.591 Y = 0373.502 Z = 0000.000</div>
<div class="a" style="left:0;top:1040px;width:1920px;height:8px;background:#1e1e1e"></div>
<div class="a" style="left:48px;top:1040px;width:344px;height:8px;background:#f0f0f0"></div>
<div class="a" style="left:392px;top:1040px;width:1528px;height:1px;background:#2a2a2a"></div>
<div class="a" style="left:687px;top:1040px;width:44px;height:8px;background:#424242"></div>
<div class="a t" style="left:1815px;top:1045px;font-size:12px;color:#fff">14:45</div>
<div class="a" style="left:1915px;top:1040px;width:1px;height:8px;background:#888"></div>
<svg class="a" style="left:1350px;top:960px" width="120" height="85" viewBox="1350 960 120 85">
<ellipse cx="1406" cy="1038.5" rx="15" ry="2.5" fill="#a86a40" opacity=".8"/>
<!-- C circle -->
<circle cx="1367.6" cy="1005.4" r="8.2" fill="#9a6050"/>
<path d="M1370.5,1001.8 a4.3,4.3 0 1 0 0,7.2" stroke="#fff" stroke-width="2.2" fill="none"/>
<!-- shirt circle -->
<circle cx="1374.5" cy="1026" r="8.3" fill="#9a6050"/>
<path d="M1369.5,1022 l3,-2 h4 l3,2 l-1.5,2.5 l-1.5,-1 v6.5 h-4 v-6.5 l-1.5,1z" fill="#fff"/>
<!-- body -->
<path d="M1390,1018 q-6,4 -3,8 q4,2 5,-1 l1,10 q6,4 12,2 q2,-3 8,-1 q6,0 5,-10 q4,2 6,-2 q1,-5 -6,-7z" fill="#f8ec50" stroke="#c88040" stroke-width=".8"/>
<path d="M1393,1032 l20,-14" stroke="#a06030" stroke-width="1.4"/>
<!-- small bear -->
<circle cx="1392" cy="1025.5" r="2" fill="#c8864a"/><circle cx="1401" cy="1025.5" r="2" fill="#c8864a"/>
<ellipse cx="1396.5" cy="1030" rx="6" ry="5" fill="#c8864a" stroke="#9a5a30" stroke-width=".6"/>
<circle cx="1393.5" cy="1031" r="1.2" fill="#f080a0"/><circle cx="1399.5" cy="1031" r="1.2" fill="#f080a0"/>
<!-- antenna -->
<path d="M1406,972 q-2,-4 -4,-5" stroke="#8a4a20" stroke-width="1.6" fill="none"/><circle cx="1401.5" cy="966.5" r="2.2" fill="#8a4a20"/>
<path d="M1409,972 q0,-3 0,-4" stroke="#8a4a20" stroke-width="1.4" fill="none"/><circle cx="1409" cy="968" r="1.4" fill="#8a4a20"/>
<!-- ears -->
<circle cx="1390.3" cy="978.5" r="6.3" fill="#c8864a" stroke="#9a5a30" stroke-width=".7"/><circle cx="1390.5" cy="979" r="2.8" fill="#f0c0a0"/>
<circle cx="1423" cy="978.5" r="6.3" fill="#c8864a" stroke="#9a5a30" stroke-width=".7"/><circle cx="1423" cy="979" r="2.8" fill="#f0c0a0"/>
<!-- hood -->
<ellipse cx="1406.5" cy="996" rx="26.5" ry="23.5" fill="#c8864a" stroke="#9a5a30" stroke-width=".8"/>
<ellipse cx="1406.5" cy="1001" rx="20.5" ry="17.5" fill="#f8f050" stroke="#c88040" stroke-width=".6"/>
<circle cx="1396" cy="994" r="1.2" fill="#5a2a10"/><circle cx="1417" cy="994" r="1.2" fill="#5a2a10"/>
<ellipse cx="1406.5" cy="997.5" rx="1.5" ry=".8" fill="#5a2a10"/>
<ellipse cx="1391.5" cy="1000" rx="3.2" ry="2.5" fill="#f8a030" opacity=".8"/><ellipse cx="1421.5" cy="1000" rx="3.2" ry="2.5" fill="#f8a030" opacity=".8"/>
<!-- WOW -->
<path d="M1436,973 l4,18 h4 l1.5,-6 l1.5,6 h4 l4,-18 h-5 l-1.8,8 l-2.2,-8 h-3.5 l-2.2,8 l-1.8,-8z" fill="#fff" stroke="#c07a50" stroke-width="1"/>
<circle cx="1440" cy="977" r="1.2" fill="#d8a070"/><circle cx="1451" cy="981" r="1.3" fill="#d8a070"/><circle cx="1445" cy="987" r="1" fill="#d8a070"/>
<circle cx="1439.5" cy="993.5" r="3" fill="#c8864a"/><circle cx="1453" cy="993.5" r="3" fill="#c8864a"/>
<ellipse cx="1446.3" cy="1001.5" rx="9.5" ry="10.5" fill="#c8864a" stroke="#9a5a30" stroke-width=".8"/>
<ellipse cx="1446.3" cy="1002" rx="3" ry="4" fill="#fff"/>
<path d="M1436,1013 l4,19 h4.5 l1.8,-7 l1.8,7 h4.5 l3.5,-19 h-5.5 l-1.5,8 l-2.2,-8 h-4 l-2.2,8 l-1.5,-8z" fill="#f8ec50" stroke="#c88040" stroke-width="1"/>
</svg>

</body></html>
